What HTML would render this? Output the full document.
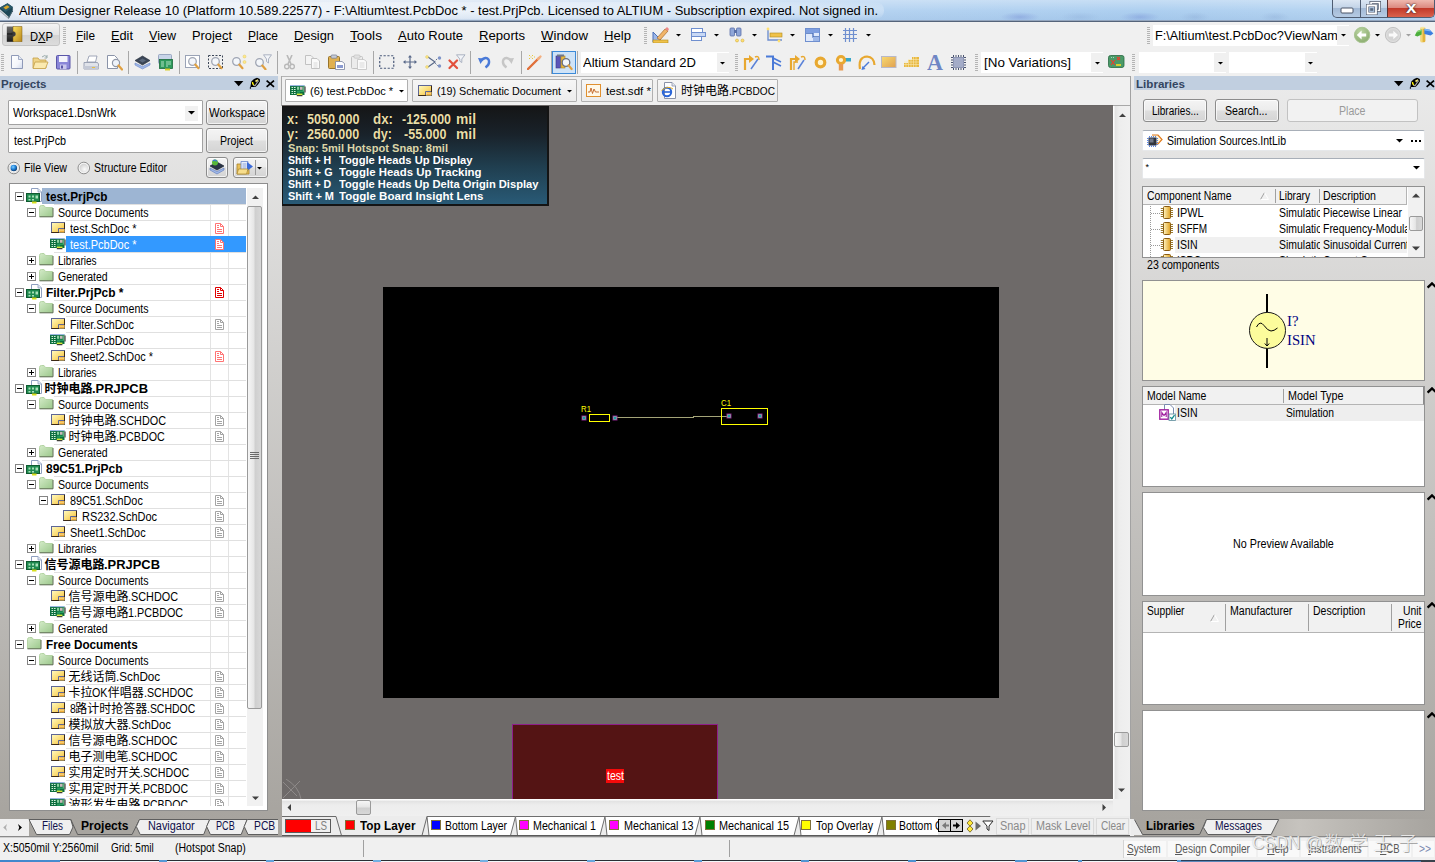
<!DOCTYPE html>
<html lang="en"><head><meta charset="utf-8"><title>Altium Designer</title><style>
html,body{margin:0;padding:0}
body{width:1435px;height:862px;overflow:hidden;position:relative;background:#f0f0f0;font-family:'Liberation Sans','Noto Sans CJK SC',sans-serif;}
.a{position:absolute;box-sizing:border-box}
.t{position:absolute;white-space:pre;margin:0;padding:0;transform-origin:0 50%}
u{text-decoration:underline;text-underline-offset:1px}
</style></head><body>
<svg width="0" height="0" style="position:absolute;left:0;top:0" aria-hidden="true"><defs><linearGradient id="fg" x1="0" y1="0" x2="1" y2="1"><stop offset="0" stop-color="#d4ebc8"/><stop offset="1" stop-color="#9cc88c"/></linearGradient><linearGradient id="sg" x1="0" y1="0" x2="1" y2="1"><stop offset="0" stop-color="#fffbc4"/><stop offset=".55" stop-color="#fbdc74"/><stop offset="1" stop-color="#f2b233"/></linearGradient><linearGradient id="cg" x1="0" y1="0" x2="1" y2="0"><stop offset="0" stop-color="#fff4c0"/><stop offset="1" stop-color="#e0a020"/></linearGradient></defs></svg>
<div class="a" style="left:0px;top:0px;width:1435px;height:22px;background:linear-gradient(to right,#e6edf6 0%,#dbe6f3 25%,#c5daf1 45%,#b0d0f0 62%,#a8ccef 80%,#b6d4f1 100%);"></div>
<div class="a" style="left:0px;top:0px;width:1435px;height:22px;background:linear-gradient(to bottom,rgba(255,255,255,.35) 0%,rgba(255,255,255,.05) 50%,rgba(120,150,190,.12) 100%);"></div>
<div class="a" style="left:70px;top:12px;width:60px;height:10px;background:radial-gradient(ellipse at center,rgba(190,140,160,.25) 0%,rgba(0,0,0,0) 70%);"></div>
<div class="a" style="left:690px;top:12px;width:70px;height:10px;background:radial-gradient(ellipse at center,rgba(190,140,170,.22) 0%,rgba(0,0,0,0) 70%);"></div>
<div class="a" style="left:1000px;top:12px;width:40px;height:10px;background:radial-gradient(ellipse at center,rgba(90,110,200,.30) 0%,rgba(0,0,0,0) 70%);"></div>
<div class="a" style="left:1120px;top:12px;width:40px;height:10px;background:radial-gradient(ellipse at center,rgba(90,110,200,.28) 0%,rgba(0,0,0,0) 70%);"></div>
<div class="a" style="left:1060px;top:12px;width:40px;height:10px;background:radial-gradient(ellipse at center,rgba(120,150,200,.2) 0%,rgba(0,0,0,0) 70%);"></div>
<div class="a" style="left:1180px;top:12px;width:30px;height:10px;background:radial-gradient(ellipse at center,rgba(110,140,190,.2) 0%,rgba(0,0,0,0) 70%);"></div>
<div class="a" style="left:1260px;top:12px;width:30px;height:10px;background:radial-gradient(ellipse at center,rgba(110,140,190,.2) 0%,rgba(0,0,0,0) 70%);"></div>
<div class="a" style="left:14px;top:2px;width:870px;height:17px;background:radial-gradient(ellipse at center,rgba(255,255,255,.55) 0%,rgba(255,255,255,.35) 60%,rgba(255,255,255,0) 100%);border-radius:8px;"></div>
<div class="a" style="left:0px;top:20px;width:1435px;height:1px;background:#93a5bd;"></div>
<div class="a" style="left:0px;top:21px;width:1435px;height:1px;background:#55647a;"></div>
<svg class="a" style="left:0px;top:2px" width="14" height="17" viewBox="0 0 14 17" ><path d="M0 5.5 L7.5 1.2 L12.8 5 L12.8 8 L8.6 15.8 L0 8.2 Z" fill="#1d4656"/><path d="M0 5.5 L7.5 1.2 L12.8 5 L5.6 10 Z" fill="#2a5a6c"/><path d="M3.4 5.6 L7.2 3.2 L9.6 5 L5.8 7.6 Z" fill="#d8a628"/><path d="M0 7.2 L8.2 14.4 L8.6 15.8 L0 8.6 Z" fill="#e8e8e8"/><path d="M0 8.8 L8.6 16 V17 L0 9.8 Z" fill="#9aa2aa"/><path d="M8.6 15.8 L12.8 8 V9.2 L8.6 17 Z" fill="#12303c"/></svg>
<span class="t" style="left:19px;top:2px;font-size:13px;line-height:17px;transform:scaleX(0.9943);">Altium Designer Release 10 (Platform 10.589.22577) - F:\Altium\test.PcbDoc * - test.PrjPcb. Licensed to ALTIUM - Subscription expired. Not signed in.</span>
<div class="a" style="left:1332px;top:0px;width:103px;height:18px;border:1px solid #4f5d72;border-top:none;border-radius:0 0 5px 5px;background:linear-gradient(to bottom,#dce7f3 0%,#c3d4e8 45%,#a3bad6 50%,#b6cbe3 100%);"></div>
<div class="a" style="left:1387px;top:0px;width:47px;height:17px;border-radius:0 0 4px 0;background:linear-gradient(to bottom,#efb9af 0%,#dc8a80 45%,#c23a2a 50%,#d9624c 100%);border-left:1px solid #5a3030;"></div>
<div class="a" style="left:1360px;top:0px;width:1px;height:17px;background:#4f5d72;"></div>
<svg class="a" style="left:1340px;top:7px" width="14" height="7" viewBox="0 0 14 7" ><rect x="1" y="1" width="12" height="5" rx="1" fill="#fff" stroke="#4a5568" stroke-width="1"/></svg>
<svg class="a" style="left:1366px;top:1px" width="15" height="14" viewBox="0 0 15 14" ><path d="M5 1.5 H13.5 V9.5 H5 Z" fill="none" stroke="#4a5568" stroke-width="3"/><path d="M5 1.5 H13.5 V9.5 H5 Z" fill="none" stroke="#fff" stroke-width="1.6"/><path d="M1.5 4.5 H10 V12.5 H1.5 Z" fill="#a9bfda" stroke="#4a5568" stroke-width="3.2"/><path d="M1.5 4.5 H10 V12.5 H1.5 Z" fill="none" stroke="#fff" stroke-width="1.8"/><rect x="4.2" y="7.2" width="3" height="2.6" fill="#5a6a80"/></svg>
<span class="t" style="left:1406px;top:-2px;font-size:17px;line-height:20px;color:#fff;font-weight:bold;transform:scaleX(1.1089);text-shadow:0 0 1px #333,0 0 2px #422;">x</span>
<div class="a" style="left:0px;top:22px;width:1435px;height:26px;background:#f0f0f0;"></div>
<div class="a" style="left:2px;top:23px;width:58px;height:23px;border:1px solid #c5c5c5;border-radius:3px;background:linear-gradient(to bottom,#f3f3f3 0%,#e4e4e4 50%,#d2d2d2 51%,#dcdcdc 100%);"></div>
<svg class="a" style="left:6px;top:26px" width="17" height="16" viewBox="0 0 17 16" ><defs><linearGradient id="dg" x1="0" y1="0" x2="0" y2="1"><stop offset="0" stop-color="#6a6a6a"/><stop offset="1" stop-color="#1c1c1c"/></linearGradient><linearGradient id="dy" x1="0" y1="0" x2="1" y2="1"><stop offset="0" stop-color="#fbe060"/><stop offset="1" stop-color="#b8861a"/></linearGradient></defs><rect x=".8" y=".5" width="7" height="15.3" fill="url(#dg)"/><path d="M7 .5 H16 V15.8 H7 V10.6 A2.6 2.6 0 0 0 7 5.4 Z" fill="url(#dy)" stroke="#7a5a10" stroke-width=".5"/><circle cx="7.3" cy="8" r="2.3" fill="#3a3a3a"/><rect x="1" y="7.2" width="5.5" height="1.5" fill="#222"/></svg>
<span class="t" style="left:29.8px;top:28px;font-size:13px;line-height:17px;transform:scaleX(0.8603);">D<u>X</u>P</span>
<div class="a" style="left:63px;top:27px;width:3px;height:17px;background:repeating-linear-gradient(to bottom,#b4b4b4 0,#b4b4b4 1px,rgba(0,0,0,0) 1px,rgba(0,0,0,0) 2px);"></div>
<span class="t" style="left:76px;top:27px;font-size:13px;line-height:17px;transform:scaleX(0.9068);"><u>F</u>ile</span>
<span class="t" style="left:111px;top:27px;font-size:13px;line-height:17px;transform:scaleX(0.9819);"><u>E</u>dit</span>
<span class="t" style="left:149px;top:27px;font-size:13px;line-height:17px;transform:scaleX(0.9659);"><u>V</u>iew</span>
<span class="t" style="left:192px;top:27px;font-size:13px;line-height:17px;transform:scaleX(0.9884);">Proje<u>c</u>t</span>
<span class="t" style="left:248px;top:27px;font-size:13px;line-height:17px;transform:scaleX(0.9222);"><u>P</u>lace</span>
<span class="t" style="left:294px;top:27px;font-size:13px;line-height:17px;transform:scaleX(0.9884);"><u>D</u>esign</span>
<span class="t" style="left:350px;top:27px;font-size:13px;line-height:17px;transform:scaleX(1.0540);"><u>T</u>ools</span>
<span class="t" style="left:398px;top:27px;font-size:13px;line-height:17px;"><u>A</u>uto Route</span>
<span class="t" style="left:479px;top:27px;font-size:13px;line-height:17px;transform:scaleX(1.0103);"><u>R</u>eports</span>
<span class="t" style="left:541px;top:27px;font-size:13px;line-height:17px;transform:scaleX(1.0162);"><u>W</u>indow</span>
<span class="t" style="left:604px;top:27px;font-size:13px;line-height:17px;transform:scaleX(1.0093);"><u>H</u>elp</span>
<div class="a" style="left:644px;top:27px;width:3px;height:17px;background:repeating-linear-gradient(to bottom,#b4b4b4 0,#b4b4b4 1px,rgba(0,0,0,0) 1px,rgba(0,0,0,0) 2px);"></div>
<svg class="a" style="left:675px;top:33px" width="7" height="4" viewBox="0 0 7 4" ><path d="M1 1 H6 L3.5 3.5 Z" fill="#000"/></svg>
<svg class="a" style="left:713px;top:33px" width="7" height="4" viewBox="0 0 7 4" ><path d="M1 1 H6 L3.5 3.5 Z" fill="#000"/></svg>
<svg class="a" style="left:751px;top:33px" width="7" height="4" viewBox="0 0 7 4" ><path d="M1 1 H6 L3.5 3.5 Z" fill="#000"/></svg>
<svg class="a" style="left:789px;top:33px" width="7" height="4" viewBox="0 0 7 4" ><path d="M1 1 H6 L3.5 3.5 Z" fill="#000"/></svg>
<svg class="a" style="left:827px;top:33px" width="7" height="4" viewBox="0 0 7 4" ><path d="M1 1 H6 L3.5 3.5 Z" fill="#000"/></svg>
<svg class="a" style="left:865px;top:33px" width="7" height="4" viewBox="0 0 7 4" ><path d="M1 1 H6 L3.5 3.5 Z" fill="#000"/></svg>
<svg class="a" style="left:652px;top:27px" width="17" height="16" viewBox="0 0 17 16" ><path d="M1 5 L1 15 L11 15 Z" fill="#9db7e8" stroke="#4a6fb8" stroke-width="1"/><rect x="1" y="13" width="15" height="3" fill="#f0c24a" stroke="#b08a20" stroke-width=".6"/><path d="M5 11 L13 2 L16 4 L8 13 Z" fill="#f1b56a" stroke="#a86a28" stroke-width=".7"/><path d="M13 2 L15 0 L17 2 L16 4Z" fill="#e88"/></svg>
<svg class="a" style="left:691px;top:28px" width="15" height="14" viewBox="0 0 15 14" ><rect x=".5" y=".5" width="11" height="4" fill="#fff" stroke="#6f8fcf"/><rect x=".5" y="4.5" width="14" height="4" fill="#c9d9f5" stroke="#6f8fcf"/><rect x=".5" y="8.5" width="10" height="4" fill="#fff" stroke="#6f8fcf"/></svg>
<svg class="a" style="left:729px;top:27px" width="16" height="16" viewBox="0 0 16 16" ><rect x="1" y="1" width="4.5" height="8" rx="1" fill="#8fa6d8" stroke="#5a70a8" stroke-width=".8"/><rect x="7.5" y="1" width="4.5" height="8" rx="1" fill="#8fa6d8" stroke="#5a70a8" stroke-width=".8"/><rect x="5" y="3" width="3" height="3" fill="#5a70a8"/><circle cx="8" cy="13.5" r="1.5" fill="#ffe070" stroke="#c8a030" stroke-width=".5"/><circle cx="13.5" cy="13.5" r="1.5" fill="#ffe070" stroke="#c8a030" stroke-width=".5"/></svg>
<svg class="a" style="left:766px;top:27px" width="18" height="16" viewBox="0 0 18 16" ><path d="M2 2 V13 H16" fill="none" stroke="#6f8fcf" stroke-width="1.4"/><rect x="4" y="6" width="12" height="4" fill="#f0c24a" stroke="#b08a20" stroke-width=".6"/><circle cx="2" cy="2" r="1.4" fill="#ffe070"/><circle cx="13" cy="14" r="1.4" fill="#ffe070"/></svg>
<svg class="a" style="left:805px;top:28px" width="15" height="14" viewBox="0 0 15 14" ><rect x=".5" y=".5" width="14" height="13" fill="#dfe9fb" stroke="#6f8fcf"/><path d="M1 5 H8 V9 H14" fill="none" stroke="#4a6fb8" stroke-width="1.3"/><rect x="1" y="1" width="13" height="4" fill="#7f9fe0"/><rect x="8" y="9" width="6" height="4" fill="#9db7e8"/></svg>
<svg class="a" style="left:843px;top:28px" width="15" height="14" viewBox="0 0 15 14" ><path d="M2.5 0V14M6.5 0V14M10.5 0V14M0 2.5H14M0 6.5H14M0 10.5H14" stroke="#6f8fcf" stroke-width="1.2" fill="none"/></svg>
<div class="a" style="left:1147px;top:27px;width:3px;height:17px;background:repeating-linear-gradient(to bottom,#b4b4b4 0,#b4b4b4 1px,rgba(0,0,0,0) 1px,rgba(0,0,0,0) 2px);"></div>
<div class="a" style="left:1153px;top:25px;width:196px;height:21px;background:#fff;"></div>
<div class="a" style="left:1337px;top:26px;width:12px;height:19px;background:#f0f0f0;"></div>
<div class="a" style="left:1154px;top:26px;width:182.5px;height:19px;overflow:hidden">
<span class="t" style="left:1px;top:1px;font-size:13px;line-height:17px;transform:scaleX(0.9751);">F:\Altium\test.PcbDoc?ViewName</span>
</div>
<svg class="a" style="left:1340px;top:33px" width="7" height="4" viewBox="0 0 7 4" ><path d="M1 1 H6 L3.5 3.5 Z" fill="#000"/></svg>
<svg class="a" style="left:1353px;top:26px" width="18" height="18" viewBox="0 0 18 18" ><defs><radialGradient id="gg" cx=".4" cy=".3" r=".8"><stop offset="0" stop-color="#bcd6a4"/><stop offset="1" stop-color="#86a86a"/></radialGradient></defs><circle cx="9.1" cy="9" r="7.7" fill="url(#gg)" stroke="#a9c592" stroke-width="1"/><path d="M3.8 9 L8.6 4.6 V7.4 H13.2 V10.6 H8.6 V13.4 Z" fill="#fff"/></svg>
<svg class="a" style="left:1374px;top:33px" width="7" height="4" viewBox="0 0 7 4" ><path d="M1 1 H6 L3.5 3.5 Z" fill="#000"/></svg>
<svg class="a" style="left:1384px;top:26px" width="18" height="18" viewBox="0 0 18 18" ><circle cx="9" cy="9" r="7.6" fill="#d4d4d4" stroke="#c2c2c2" stroke-width="1"/><circle cx="9" cy="9" r="6.4" fill="none" stroke="#e2e2e2" stroke-width=".8"/><path d="M14 9 L9.3 4.7 V7.5 H4.8 V10.5 H9.3 V13.3 Z" fill="#fafafa"/></svg>
<svg class="a" style="left:1405px;top:33px" width="7" height="4" viewBox="0 0 7 4" ><path d="M1 1 H6 L3.5 3.5 Z" fill="#a0a0a0"/></svg>
<svg class="a" style="left:1414px;top:26px" width="20" height="18" viewBox="0 0 20 18" ><rect x="6.6" y="1.2" width="4.8" height="15" rx="1.5" fill="#e3b33c"/><rect x="6.6" y="1.2" width="2" height="15" fill="#f4d877"/><ellipse cx="9" cy="1.8" rx="2.4" ry="1" fill="#f8e8a0"/><path d="M7.6 3.4 L3.2 5 L.8 9.4 L3.4 10.4 L7.6 8.6 Z" fill="#4cae3c"/><path d="M7.6 3.4 L3.2 5 L2.6 6.6 L7.6 5 Z" fill="#8ad878"/><path d="M10.4 2.8 L15.8 3.8 L19.4 7.6 L16.6 9.4 L10.4 8 Z" fill="#3c7ede"/><path d="M10.4 2.8 L15.8 3.8 L17.2 5.4 L10.4 4.4 Z" fill="#7cb8f8"/></svg>
<div class="a" style="left:0px;top:48px;width:1435px;height:28px;background:#f0f0f0;"></div>
<div class="a" style="left:278px;top:76px;width:855px;height:1px;background:#b4b4b4;"></div>
<div class="a" style="left:1px;top:54px;width:3px;height:17px;background:repeating-linear-gradient(to bottom,#b4b4b4 0,#b4b4b4 1px,rgba(0,0,0,0) 1px,rgba(0,0,0,0) 2px);"></div>
<div class="a" style="left:77px;top:51px;width:1px;height:23px;background:#a8a8a8;"></div>
<div class="a" style="left:128px;top:51px;width:1px;height:23px;background:#a8a8a8;"></div>
<div class="a" style="left:179px;top:51px;width:1px;height:23px;background:#a8a8a8;"></div>
<div class="a" style="left:277px;top:51px;width:1px;height:23px;background:#a8a8a8;"></div>
<div class="a" style="left:373px;top:51px;width:1px;height:23px;background:#a8a8a8;"></div>
<div class="a" style="left:470px;top:51px;width:1px;height:23px;background:#a8a8a8;"></div>
<div class="a" style="left:521px;top:51px;width:1px;height:23px;background:#a8a8a8;"></div>
<div class="a" style="left:551px;top:51px;width:1px;height:23px;background:#a8a8a8;"></div>
<div class="a" style="left:577px;top:51px;width:1px;height:23px;background:#a8a8a8;"></div>
<svg class="a" style="left:10.5px;top:55px" width="13" height="15" viewBox="0 0 13 15" ><defs><linearGradient id="nd" x1="0" y1="0" x2="1" y2="1"><stop offset="0" stop-color="#fff"/><stop offset=".6" stop-color="#f4f6fb"/><stop offset="1" stop-color="#cfd8ec"/></linearGradient></defs><path d="M.5 .5 H7.5 L11.5 4.5 V13.5 H.5 Z" fill="url(#nd)" stroke="#8f9ab8" stroke-width="1"/><path d="M7.5 .5 V4.5 H11.5" fill="#e4e9f4" stroke="#8f9ab8" stroke-width=".8"/></svg>
<svg class="a" style="left:32px;top:54px" width="17" height="16" viewBox="0 0 17 16" ><path d="M1 4 H6 L7.5 6 H14 V14 H1 Z" fill="#efd488" stroke="#c4a048" stroke-width=".8"/><path d="M3 8 H16 L13.5 14.5 H1 Z" fill="#fbeab0" stroke="#c4a048" stroke-width=".8"/><path d="M10 3 Q13 0 15 3" fill="none" stroke="#9aa" stroke-width="1"/><path d="M15 1 V4 H12.5" fill="none" stroke="#9aa" stroke-width="1"/></svg>
<svg class="a" style="left:56px;top:55px" width="15" height="15" viewBox="0 0 15 15" ><rect x=".5" y=".5" width="13.5" height="13.5" rx="1" fill="#8a86d8" stroke="#5a56a8"/><rect x="3" y="1" width="8.5" height="6" fill="#f4f4fb"/><rect x="4" y="9.5" width="6.5" height="4.5" fill="#c8c6ec"/><rect x="5" y="10.5" width="2" height="3" fill="#5a56a8"/></svg>
<svg class="a" style="left:83px;top:55px" width="16" height="15" viewBox="0 0 16 15" ><path d="M4 7 L6 1 H14 L12.5 7 Z" fill="#fff" stroke="#8a93a8" stroke-width=".8"/><path d="M1 7.5 H14.5 L15.5 9 V14 H1 Z" fill="#e0e3ea" stroke="#8a93a8" stroke-width=".8"/><rect x="1" y="11" width="14.5" height="3" fill="#c4c9d6"/><rect x="9" y="12" width="3" height="1" fill="#e8c040"/></svg>
<svg class="a" style="left:107px;top:55px" width="16" height="16" viewBox="0 0 16 16" ><path d="M.5 .5 H7.5 L10.5 3.5 V13.5 H.5 Z" fill="#fff" stroke="#8a93a8" stroke-width="1"/><circle cx="9" cy="8" r="3.6" fill="#eef3fa" stroke="#9098a8" stroke-width="1.2"/><path d="M11.5 10.5 L15 14.5" stroke="#e0a040" stroke-width="2.2" stroke-linecap="round"/></svg>
<svg class="a" style="left:134px;top:55px" width="17" height="15" viewBox="0 0 17 15" ><path d="M1 8 L8.5 11.5 L16 8 V10 L8.5 14 L1 10 Z" fill="#9fb8e8" stroke="#6a86c8" stroke-width=".6"/><path d="M1 5.5 L8.5 1 L16 5.5 L8.5 10 Z" fill="#3a4556" stroke="#222a36" stroke-width=".6"/><path d="M5 5.5 L8.5 3.4 L12 5.5 L8.5 7.6Z" fill="#5a687c"/></svg>
<svg class="a" style="left:157px;top:54px" width="17" height="17" viewBox="0 0 17 17" ><rect x="1.5" y=".5" width="13" height="9" rx="1" fill="#c8d4e8" stroke="#8a9ab8" stroke-width=".8"/><rect x="2.5" y="5.5" width="13" height="9" fill="#2f9a5c" stroke="#1a6a3a" stroke-width=".8"/><path d="M4 8h3M4 10h3M4 12h3M9 8h5M9 10h5M9 12h2" stroke="#bfeccf" stroke-width=".9"/><rect x="8" y="14.5" width="5" height="2" fill="#d8d030"/></svg>
<svg class="a" style="left:185px;top:55px" width="16" height="15" viewBox="0 0 16 15" ><rect x=".5" y=".5" width="14" height="12" fill="#fff" stroke="#9aa3b6"/><circle cx="7.5" cy="6.5" r="3.8" fill="#f4f7fb" stroke="#a0a6b4" stroke-width="1.3"/><path d="M10.3 9.6 L13.5 13.2" stroke="#e0a040" stroke-width="2.2" stroke-linecap="round"/></svg>
<svg class="a" style="left:208px;top:55px" width="16" height="15" viewBox="0 0 16 15" ><rect x=".5" y=".5" width="14" height="13" fill="none" stroke="#3c4658" stroke-dasharray="2 1.5"/><circle cx="7.5" cy="6.5" r="3.8" fill="#f4f7fb" stroke="#a0a6b4" stroke-width="1.3"/><path d="M10.3 9.6 L13.5 13.2" stroke="#e0a040" stroke-width="2.2" stroke-linecap="round"/></svg>
<svg class="a" style="left:231px;top:54px" width="17" height="16" viewBox="0 0 17 16" ><circle cx="5.5" cy="7.5" r="3.8" fill="#f4f7fb" stroke="#a0a6b4" stroke-width="1.3"/><path d="M8.3 10.6 L11.5 14.2" stroke="#e0a040" stroke-width="2.2" stroke-linecap="round"/><circle cx="13.5" cy="2.5" r="1.5" fill="#ffe98a" stroke="#d8c050" stroke-width=".4"/><circle cx="13.5" cy="8" r="1.5" fill="#ffe98a" stroke="#d8c050" stroke-width=".4"/></svg>
<svg class="a" style="left:254px;top:54px" width="18" height="16" viewBox="0 0 18 16" ><circle cx="5.5" cy="8.5" r="3.8" fill="#f4f7fb" stroke="#a0a6b4" stroke-width="1.3"/><path d="M8.3 11.6 L11.5 15.2" stroke="#e0a040" stroke-width="2.2" stroke-linecap="round"/><path d="M9.5 .8 H17.5 L14.5 5 V9 L12.5 7.5 V5 Z" fill="#f2f4f8" stroke="#9aa3b6" stroke-width=".8"/></svg>
<svg class="a" style="left:284px;top:55px" width="11" height="15" viewBox="0 0 11 15" ><path d="M3 0 L7 9 M8 0 L4 9" stroke="#b9b9b9" stroke-width="1.6" fill="none"/><circle cx="2.8" cy="11.5" r="2.2" fill="none" stroke="#b9b9b9" stroke-width="1.4"/><circle cx="8.2" cy="11.5" r="2.2" fill="none" stroke="#b9b9b9" stroke-width="1.4"/></svg>
<svg class="a" style="left:305px;top:55px" width="16" height="14" viewBox="0 0 16 14" ><path d="M.5 .5 H6 L8.5 3 V9.5 H.5 Z" fill="#f4f4f4" stroke="#c2c2c2"/><path d="M6.5 3.5 H12 L14.5 6 V13.5 H6.5 Z" fill="#fafafa" stroke="#c2c2c2"/><path d="M8.5 8h4M8.5 10h4M8.5 12h4" stroke="#d0d0d0" stroke-width=".8"/></svg>
<svg class="a" style="left:328px;top:54px" width="17" height="16" viewBox="0 0 17 16" ><rect x=".5" y="2.5" width="11" height="12" rx="1" fill="#e0b050" stroke="#98742a"/><rect x="3" y="1" width="6" height="3.2" rx="1" fill="#c8ccd6" stroke="#70788c" stroke-width=".7"/><path d="M7.5 7.5 H14 L16.5 9.5 V15.5 H7.5 Z" fill="#fff" stroke="#7a84a0" stroke-width=".8"/><rect x="9" y="11" width="6" height="3" fill="#8a9ad0"/></svg>
<svg class="a" style="left:351px;top:54px" width="17" height="16" viewBox="0 0 17 16" ><rect x=".5" y="2.5" width="11" height="12" rx="1" fill="#ececec" stroke="#c2c2c2"/><rect x="3" y="1" width="6" height="3.2" rx="1" fill="#e2e2e2" stroke="#c2c2c2" stroke-width=".7"/><path d="M6.5 5.5 H13 L15.5 7.5 V15.5 H6.5 Z" fill="#fafafa" stroke="#c2c2c2" stroke-width=".8"/><path d="M8.5 9h5M8.5 11h5M8.5 13h5" stroke="#d0d0d0" stroke-width=".8"/></svg>
<svg class="a" style="left:379px;top:55px" width="16" height="15" viewBox="0 0 16 15" ><rect x=".75" y=".75" width="14" height="12.5" fill="none" stroke="#4a5a7a" stroke-width="1.2" stroke-dasharray="2.2 1.6"/></svg>
<svg class="a" style="left:403px;top:55px" width="14" height="14" viewBox="0 0 14 14" ><path d="M7 1V13M1 7H13" stroke="#5a6a8a" stroke-width="1.2"/><path d="M7 0L9 2.5H5ZM7 14L9 11.5H5ZM0 7L2.5 5V9ZM14 7L11.5 5V9Z" fill="#5a6a8a"/></svg>
<svg class="a" style="left:425px;top:55px" width="17" height="14" viewBox="0 0 17 14" ><path d="M3 2 L10 7 L3 12" fill="none" stroke="#5a6a8a" stroke-width="1.2"/><path d="M14 2L9 7L14 12" fill="none" stroke="#5a6a8a" stroke-width="1" stroke-dasharray="1.5 1.2"/><circle cx="2" cy="2" r="1.4" fill="#ffe98a" stroke="#d8c050" stroke-width=".4"/><circle cx="2" cy="12" r="1.4" fill="#ffe98a" stroke="#d8c050" stroke-width=".4"/><circle cx="14.5" cy="3" r="1.7" fill="#7f94c8"/><circle cx="14.5" cy="11" r="1.7" fill="#7f94c8"/></svg>
<svg class="a" style="left:448px;top:54px" width="18" height="16" viewBox="0 0 18 16" ><path d="M1.5 6.5 L9 14 M9 6.5 L1.5 14" stroke="#e2503c" stroke-width="2.2" stroke-linecap="round"/><path d="M8.5 .8 H17 L13.8 5 V8.5 L11.8 7.2 V5 Z" fill="#f2f4f8" stroke="#9aa3b6" stroke-width=".8"/></svg>
<svg class="a" style="left:478px;top:55px" width="13" height="14" viewBox="0 0 13 14" ><path d="M3 5.5 Q8 1 10.5 4.5 Q12.5 9 7.5 12.5" fill="none" stroke="#4a7ad8" stroke-width="2.4"/><path d="M0 3 L6 3.5 L2.5 9 Z" fill="#4a7ad8"/></svg>
<svg class="a" style="left:501px;top:55px" width="13" height="14" viewBox="0 0 13 14" ><path d="M10 5.5 Q5 1 2.5 4.5 Q.5 9 5.5 12.5" fill="none" stroke="#c6c6c6" stroke-width="2.4"/><path d="M13 3 L7 3.5 L10.5 9 Z" fill="#c6c6c6"/></svg>
<svg class="a" style="left:527px;top:54px" width="16" height="16" viewBox="0 0 16 16" ><path d="M1 15 L12 4" stroke="#e0703a" stroke-width="2.4" stroke-linecap="round"/><path d="M11 5 L13.5 2.5" stroke="#f4b080" stroke-width="2.4" stroke-linecap="round"/><path d="M2 1h1v1h-1zM5 1h1v1h-1zM2 4h1v1h-1zM5 4h1v1h-1zM3.5 2.5h1v1h-1zM7 2.5h1v1h-1z" fill="#e8c83a"/></svg>
<div class="a" style="left:552px;top:51px;width:24px;height:23px;border:1px solid #3c8ad8;background:#cfe3f7;"></div>
<svg class="a" style="left:555px;top:54px" width="18" height="17" viewBox="0 0 18 17" ><rect x="1" y="2" width="4.5" height="12" fill="#5a54b8" stroke="#3a3688" stroke-width=".6"/><rect x="6" y="2" width="4" height="12" fill="#e8b840" stroke="#a88020" stroke-width=".6"/><rect x="2" y="0.5" width="7" height="2" fill="#70788c"/><circle cx="11" cy="8.5" r="3.8" fill="#f4f7fb" stroke="#6a7080" stroke-width="1.3"/><path d="M13.6 11.4 L16.6 15" stroke="#e0a040" stroke-width="2.2" stroke-linecap="round"/></svg>
<div class="a" style="left:581px;top:52px;width:148px;height:21px;background:#fff;"></div>
<div class="a" style="left:717px;top:53px;width:12px;height:19px;background:#f0f0f0;"></div>
<span class="t" style="left:583px;top:54px;font-size:13px;line-height:17px;transform:scaleX(1.0024);">Altium Standard 2D</span>
<svg class="a" style="left:719px;top:61px" width="7" height="4" viewBox="0 0 7 4" ><path d="M1 1 H6 L3.5 3.5 Z" fill="#000"/></svg>
<div class="a" style="left:735px;top:54px;width:3px;height:17px;background:repeating-linear-gradient(to bottom,#b4b4b4 0,#b4b4b4 1px,rgba(0,0,0,0) 1px,rgba(0,0,0,0) 2px);"></div>
<svg class="a" style="left:743px;top:54px" width="17" height="17" viewBox="0 0 17 17" ><path d="M2 16 V5 H9" fill="none" stroke="#e8a830" stroke-width="2.2"/><path d="M6 1 L11 5 L6 9 Z" fill="#e8a830"/><path d="M8 15 L15 5" stroke="#5a82d8" stroke-width="1.5"/><path d="M12 3 Q16 1 16 6" fill="none" stroke="#e8a830" stroke-width="1.5"/></svg>
<svg class="a" style="left:766px;top:54px" width="17" height="17" viewBox="0 0 17 17" ><path d="M0 2.5 H7 V16" fill="none" stroke="#4a7ad8" stroke-width="2"/><path d="M7 4 L15 8 M7 8 L15 12" stroke="#4a7ad8" stroke-width="1.6"/></svg>
<svg class="a" style="left:789px;top:54px" width="17" height="17" viewBox="0 0 17 17" ><path d="M2 16 V5 H9" fill="none" stroke="#e8a830" stroke-width="2.2"/><path d="M5 16 V8 H9" fill="none" stroke="#e8a830" stroke-width="1.4"/><path d="M6 1 L11 5 L6 9 Z" fill="#e8a830"/><path d="M9 15 L15 6" stroke="#5a82d8" stroke-width="1.5"/><path d="M12 3 Q16 1 16 6" fill="none" stroke="#e8a830" stroke-width="1.5"/></svg>
<svg class="a" style="left:814px;top:56px" width="13" height="13" viewBox="0 0 13 13" ><circle cx="6.5" cy="6.5" r="4.3" fill="#fff4d0" stroke="#e8a830" stroke-width="3.2"/></svg>
<svg class="a" style="left:835px;top:54px" width="17" height="17" viewBox="0 0 17 17" ><rect x="8" y="4" width="8" height="3.5" fill="#38a8c8"/><circle cx="6" cy="6" r="3.6" fill="#fff4d0" stroke="#e8a830" stroke-width="3"/><rect x="3.8" y="10" width="4.4" height="6.5" fill="#e89a50"/></svg>
<svg class="a" style="left:858px;top:54px" width="18" height="17" viewBox="0 0 18 17" ><path d="M2 15 Q0 3 9 2.5 Q16 3 16.5 11" fill="none" stroke="#e8a830" stroke-width="2.2"/><path d="M5 14 L11 8" stroke="#4a7ad8" stroke-width="1.4"/><path d="M3.5 16 L4.5 12 L7.5 15Z" fill="#4a7ad8"/></svg>
<svg class="a" style="left:881px;top:56px" width="16" height="13" viewBox="0 0 16 13" ><defs><linearGradient id="gf" x1="0" y1="0" x2="1" y2="1"><stop offset="0" stop-color="#f8da70"/><stop offset="1" stop-color="#e0a050"/></linearGradient></defs><rect x=".5" y=".5" width="14.5" height="11" fill="url(#gf)" stroke="#b8b8c8" stroke-width="1"/></svg>
<svg class="a" style="left:904px;top:56px" width="16" height="12" viewBox="0 0 16 12" ><path d="M0 11 V7 H4 V4 H8 V1 H15 V11 Z" fill="#e8b840"/><path d="M0 8.5H15M0 6H15M4 3.5H15M2 7V11M4.5 4V11M7 4V11M9.5 1V11M12 1V11" stroke="#f8e8b0" stroke-width=".6"/></svg>
<span class="t" style="left:927px;top:50px;font-size:23px;line-height:26px;color:#6f86c4;font-weight:bold;font-family:'Liberation Serif','Noto Serif CJK SC',serif;transform:scaleX(0.9624);">A</span>
<svg class="a" style="left:950px;top:54px" width="17" height="17" viewBox="0 0 17 17" ><rect x="3" y="3" width="11" height="11" fill="#8e96b4"/><rect x="4" y="4" width="9" height="9" fill="#a4acc8"/><path d="M3.5 1v2M6 1v2M8.5 1v2M11 1v2M13.5 1v2M3.5 14v2M6 14v2M8.5 14v2M11 14v2M13.5 14v2M1 3.5h2M1 6h2M1 8.5h2M1 11h2M1 13.5h2M14 3.5h2M14 6h2M14 8.5h2M14 11h2M14 13.5h2" stroke="#4a5470" stroke-width="1"/></svg>
<div class="a" style="left:975px;top:54px;width:3px;height:17px;background:repeating-linear-gradient(to bottom,#b4b4b4 0,#b4b4b4 1px,rgba(0,0,0,0) 1px,rgba(0,0,0,0) 2px);"></div>
<div class="a" style="left:981px;top:52px;width:122px;height:21px;background:#fff;"></div>
<div class="a" style="left:1091px;top:53px;width:12px;height:19px;background:#f0f0f0;"></div>
<span class="t" style="left:984px;top:54px;font-size:13px;line-height:17px;transform:scaleX(1.0321);">[No Variations]</span>
<svg class="a" style="left:1094px;top:61px" width="7" height="4" viewBox="0 0 7 4" ><path d="M1 1 H6 L3.5 3.5 Z" fill="#000"/></svg>
<svg class="a" style="left:1108px;top:54px" width="17" height="16" viewBox="0 0 17 16" ><rect x=".5" y="1.5" width="15.5" height="12" rx="2" fill="#4a9a68" stroke="#2a6a42" stroke-width=".8"/><path d="M3 6 L7 11 M7 6 L3 11 M9 3 L12 6 M12 3 L9 6" stroke="#e84030" stroke-width="1.2"/><rect x="8" y="10" width="5" height="2" fill="#d8d030"/><path d="M3 3.5h4" stroke="#bfeccf" stroke-width=".8" stroke-dasharray="1 1"/></svg>
<div class="a" style="left:1132px;top:54px;width:3px;height:17px;background:repeating-linear-gradient(to bottom,#b4b4b4 0,#b4b4b4 1px,rgba(0,0,0,0) 1px,rgba(0,0,0,0) 2px);"></div>
<div class="a" style="left:1139px;top:52px;width:87px;height:21px;background:#fff;"></div>
<div class="a" style="left:1214px;top:53px;width:12px;height:19px;background:#f0f0f0;"></div>
<svg class="a" style="left:1217px;top:61px" width="7" height="4" viewBox="0 0 7 4" ><path d="M1 1 H6 L3.5 3.5 Z" fill="#000"/></svg>
<div class="a" style="left:1229px;top:52px;width:88px;height:21px;background:#fff;"></div>
<div class="a" style="left:1305px;top:53px;width:12px;height:19px;background:#f0f0f0;"></div>
<svg class="a" style="left:1307px;top:61px" width="7" height="4" viewBox="0 0 7 4" ><path d="M1 1 H6 L3.5 3.5 Z" fill="#000"/></svg>
<div class="a" style="left:0px;top:76px;width:282px;height:743px;background:linear-gradient(to bottom,#ebebeb 0%,#a7a49f 100%);"></div>
<div class="a" style="left:281px;top:76px;width:1px;height:30px;background:#a8a8a8;"></div>
<div class="a" style="left:0px;top:76px;width:278px;height:14px;background:#c1cfe0;"></div>
<span class="t" style="left:0.5px;top:77px;font-size:11px;line-height:15px;color:#334560;font-weight:bold;transform:scaleX(1.0479);">Projects</span>
<svg class="a" style="left:234px;top:81px" width="10" height="6" viewBox="0 0 10 6" ><path d="M0 0 H9.4 L4.7 5.2 Z" fill="#000"/></svg>
<svg class="a" style="left:249px;top:77px" width="12" height="12" viewBox="0 0 12 12" ><path d="M1.2 11 L2.3 4.5 L5 2 L8 .8 L10.8 2 L11 4.5 L9 7.5 L6.5 10 L2.2 10 Z" fill="#000"/><circle cx="1.4" cy="11" r=".7" fill="#000"/><path d="M3.6 5 Q3.2 7.2 5 8" stroke="#fff200" stroke-width="1.5" fill="none"/><path d="M6 3.8 L8.6 2.2 L9.4 3.2 L7 5.2 Z" fill="#fff27a"/><path d="M4.3 8.2 L6 8.8 L8.2 5.5 L9.6 3.6" stroke="#a8a8a8" stroke-width="1.2" fill="none"/></svg>
<svg class="a" style="left:266px;top:80px" width="9" height="8" viewBox="0 0 9 8" ><path d="M.6 .6 L8 6.8 M8 .6 L.6 6.8" stroke="#000" stroke-width="1.7"/></svg>
<div class="a" style="left:8px;top:100px;width:195px;height:25px;background:#fff;border:1px solid #a2a2a2;border-radius:1px;"></div>
<div class="a" style="left:185px;top:106px;width:13px;height:15px;background:#f1f1f1;"></div>
<svg class="a" style="left:187px;top:110px" width="9" height="5" viewBox="0 0 9 5" ><path d="M1 1 H8 L4.5 4.5 Z" fill="#000"/></svg>
<span class="t" style="left:13px;top:105px;font-size:12px;line-height:16px;transform:scaleX(0.9175);">Workspace1.DsnWrk</span>
<div class="a" style="left:206px;top:100px;width:62px;height:25px;border:1px solid #8c8c8c;border-radius:3px;background:linear-gradient(to bottom,#f4f4f4 0%,#ececec 48%,#dedede 52%,#d4d4d4 100%);box-shadow:inset 0 0 0 1px rgba(255,255,255,.7);"></div>
<span class="t" style="left:209px;top:105px;font-size:12px;line-height:16px;transform:scaleX(0.9363);">Workspace</span>
<div class="a" style="left:8px;top:128px;width:195px;height:25px;background:#fff;border:1px solid #a2a2a2;border-radius:1px;"></div>
<span class="t" style="left:14px;top:133px;font-size:12px;line-height:16px;transform:scaleX(0.8961);">test.PrjPcb</span>
<div class="a" style="left:206px;top:128px;width:62px;height:25px;border:1px solid #8c8c8c;border-radius:3px;background:linear-gradient(to bottom,#f4f4f4 0%,#ececec 48%,#dedede 52%,#d4d4d4 100%);box-shadow:inset 0 0 0 1px rgba(255,255,255,.7);"></div>
<span class="t" style="left:220px;top:133px;font-size:12px;line-height:16px;transform:scaleX(0.8833);">Project</span>
<svg class="a" style="left:7px;top:161px" width="14" height="14" viewBox="0 0 14 14" ><defs><radialGradient id="rg" cx=".4" cy=".35" r=".7"><stop offset="0" stop-color="#7fd0ff"/><stop offset=".5" stop-color="#1f80d8"/><stop offset="1" stop-color="#0a2f5c"/></radialGradient></defs><circle cx="6.8" cy="7" r="5.8" fill="#f6f6f6" stroke="#8a8a8a" stroke-width="1"/><circle cx="6.8" cy="7" r="4.4" fill="#fff" stroke="#d0d0d0" stroke-width=".6"/><circle cx="6.8" cy="7" r="3.3" fill="url(#rg)"/></svg>
<span class="t" style="left:24px;top:160px;font-size:12px;line-height:16px;transform:scaleX(0.8872);">File View</span>
<svg class="a" style="left:77px;top:161px" width="14" height="14" viewBox="0 0 14 14" ><defs><radialGradient id="rg2" cx=".6" cy=".65" r=".7"><stop offset="0" stop-color="#fbfbfb"/><stop offset="1" stop-color="#cfcfcf"/></radialGradient></defs><circle cx="6.8" cy="7" r="5.8" fill="#f4f4f4" stroke="#8f8f8f" stroke-width="1"/><circle cx="6.8" cy="7" r="4.2" fill="url(#rg2)"/></svg>
<span class="t" style="left:94px;top:160px;font-size:12px;line-height:16px;transform:scaleX(0.8756);">Structure Editor</span>
<div class="a" style="left:206px;top:157px;width:22px;height:21px;border:1px solid #8c8c8c;border-radius:3px;background:linear-gradient(to bottom,#f4f4f4 0%,#ececec 48%,#dedede 52%,#d4d4d4 100%);box-shadow:inset 0 0 0 1px rgba(255,255,255,.7);"></div>
<svg class="a" style="left:209px;top:159px" width="16" height="16" viewBox="0 0 16 16" ><path d="M1 9 L8 12.5 L15 9 V11 L8 15 L1 11 Z" fill="#9fb8e8" stroke="#5a76b8" stroke-width=".6"/><path d="M1 7 L8 3 L15 7 L8 11 Z" fill="#2a3446" stroke="#111a26" stroke-width=".6"/><circle cx="6" cy="3.5" r="3" fill="#58b838"/><path d="M4 2 Q6 0 8 2.5" stroke="#3a7ad8" stroke-width="1.2" fill="none"/></svg>
<div class="a" style="left:233px;top:157px;width:35px;height:21px;border:1px solid #8c8c8c;border-radius:3px;background:linear-gradient(to bottom,#f4f4f4 0%,#ececec 48%,#dedede 52%,#d4d4d4 100%);box-shadow:inset 0 0 0 1px rgba(255,255,255,.7);"></div>
<svg class="a" style="left:236px;top:159px" width="18" height="17" viewBox="0 0 18 17" ><path d="M1 5 H5 L6.5 7 H13 V15 H1 Z" fill="#e8c05a" stroke="#a8842c" stroke-width=".8"/><path d="M5 2.5 H12 V11 H5 Z" fill="#e8eefc" stroke="#6a86c8" stroke-width=".8"/><path d="M6.5 5h4M6.5 7h4M6.5 9h4" stroke="#6a86c8" stroke-width=".7"/><path d="M11 3 L17 7.5 L11 12 Z" fill="#3a6ad8"/><path d="M2.5 10 H12 L10.5 15 H1 Z" fill="#f8de8c" stroke="#a8842c" stroke-width=".7"/></svg>
<div class="a" style="left:255px;top:160px;width:1px;height:15px;background:#9a9a9a;"></div>
<svg class="a" style="left:256px;top:166px" width="7" height="4" viewBox="0 0 7 4" ><path d="M1 1 H6 L3.5 3.5 Z" fill="#000"/></svg>
<div class="a" style="left:9px;top:183px;width:259px;height:628px;background:#fff;border:1px solid #8e8e8e;"></div>
<div class="a" style="left:10px;top:185px;width:237px;height:621px;overflow:hidden">
<div class="a" style="left:200px;top:19px;width:1px;height:620px;background:#e3e3e3"></div>
<div class="a" style="left:218px;top:19px;width:1px;height:620px;background:#e3e3e3"></div>
<div class="a" style="left:32px;top:3px;width:204px;height:16px;background:#9db5d3"></div>
<div class="a" style="left:44px;top:19px;width:192px;height:1px;background:#e0e0e0"></div>
<div class="a" style="left:56px;top:35px;width:180px;height:1px;background:#e0e0e0"></div>
<div class="a" style="left:56px;top:51px;width:180px;height:1px;background:#e0e0e0"></div>
<div class="a" style="left:56px;top:51px;width:180px;height:16px;background:#3399ff"></div>
<div class="a" style="left:44px;top:67px;width:192px;height:1px;background:#e0e0e0"></div>
<div class="a" style="left:44px;top:83px;width:192px;height:1px;background:#e0e0e0"></div>
<div class="a" style="left:32px;top:99px;width:204px;height:1px;background:#e0e0e0"></div>
<div class="a" style="left:44px;top:115px;width:192px;height:1px;background:#e0e0e0"></div>
<div class="a" style="left:56px;top:131px;width:180px;height:1px;background:#e0e0e0"></div>
<div class="a" style="left:56px;top:147px;width:180px;height:1px;background:#e0e0e0"></div>
<div class="a" style="left:56px;top:163px;width:180px;height:1px;background:#e0e0e0"></div>
<div class="a" style="left:44px;top:179px;width:192px;height:1px;background:#e0e0e0"></div>
<div class="a" style="left:32px;top:195px;width:204px;height:1px;background:#e0e0e0"></div>
<div class="a" style="left:44px;top:211px;width:192px;height:1px;background:#e0e0e0"></div>
<div class="a" style="left:56px;top:227px;width:180px;height:1px;background:#e0e0e0"></div>
<div class="a" style="left:56px;top:243px;width:180px;height:1px;background:#e0e0e0"></div>
<div class="a" style="left:44px;top:259px;width:192px;height:1px;background:#e0e0e0"></div>
<div class="a" style="left:32px;top:275px;width:204px;height:1px;background:#e0e0e0"></div>
<div class="a" style="left:44px;top:291px;width:192px;height:1px;background:#e0e0e0"></div>
<div class="a" style="left:56px;top:307px;width:180px;height:1px;background:#e0e0e0"></div>
<div class="a" style="left:68px;top:323px;width:168px;height:1px;background:#e0e0e0"></div>
<div class="a" style="left:56px;top:339px;width:180px;height:1px;background:#e0e0e0"></div>
<div class="a" style="left:44px;top:355px;width:192px;height:1px;background:#e0e0e0"></div>
<div class="a" style="left:32px;top:371px;width:204px;height:1px;background:#e0e0e0"></div>
<div class="a" style="left:44px;top:387px;width:192px;height:1px;background:#e0e0e0"></div>
<div class="a" style="left:56px;top:403px;width:180px;height:1px;background:#e0e0e0"></div>
<div class="a" style="left:56px;top:419px;width:180px;height:1px;background:#e0e0e0"></div>
<div class="a" style="left:44px;top:435px;width:192px;height:1px;background:#e0e0e0"></div>
<div class="a" style="left:32px;top:451px;width:204px;height:1px;background:#e0e0e0"></div>
<div class="a" style="left:44px;top:467px;width:192px;height:1px;background:#e0e0e0"></div>
<div class="a" style="left:56px;top:483px;width:180px;height:1px;background:#e0e0e0"></div>
<div class="a" style="left:56px;top:499px;width:180px;height:1px;background:#e0e0e0"></div>
<div class="a" style="left:56px;top:515px;width:180px;height:1px;background:#e0e0e0"></div>
<div class="a" style="left:56px;top:531px;width:180px;height:1px;background:#e0e0e0"></div>
<div class="a" style="left:56px;top:547px;width:180px;height:1px;background:#e0e0e0"></div>
<div class="a" style="left:56px;top:563px;width:180px;height:1px;background:#e0e0e0"></div>
<div class="a" style="left:56px;top:579px;width:180px;height:1px;background:#e0e0e0"></div>
<div class="a" style="left:56px;top:595px;width:180px;height:1px;background:#e0e0e0"></div>
<div class="a" style="left:56px;top:611px;width:180px;height:1px;background:#e0e0e0"></div>
<svg class="a" style="left:5px;top:7px" width="9" height="9" viewBox="0 0 9 9" ><rect x=".5" y=".5" width="8" height="8" fill="#fff" stroke="#848484"/><path d="M2 4.5h5" stroke="#000"/></svg>
<svg class="a" style="left:16px;top:3px" width="16" height="16" viewBox="0 0 16 16" ><path d="M5.5 .5 H12 L15.5 4 V13.5 H5.5 Z" fill="#fff" stroke="#8fa0c0" stroke-width="1"/><path d="M12 .5 V4 H15.5" fill="#dfe6f2" stroke="#8fa0c0" stroke-width=".8"/><rect x=".5" y="5.5" width="13" height="8" fill="#1f8a50" stroke="#0f5a30" stroke-width="1"/><path d="M2.5 7.5h2v2h-2zM6 7.5h2v2h-2zM9.5 7.5h2.5v3h-2.5zM2.5 11h2v1.5h-2zM6 11h2v1.5h-2z" fill="#a8e0b8"/><rect x="6" y="13.5" width="4.5" height="2" fill="#d8e020"/></svg>
<span class="t" style="left:35.5px;top:4px;font-size:12px;line-height:16px;font-weight:bold;"><span style="display:inline-block;width:61.50px;transform:scaleX(0.9808);transform-origin:0 50%">test.PrjPcb</span></span>
<svg class="a" style="left:17px;top:23px" width="9" height="9" viewBox="0 0 9 9" ><rect x=".5" y=".5" width="8" height="8" fill="#fff" stroke="#848484"/><path d="M2 4.5h5" stroke="#000"/></svg>
<svg class="a" style="left:29px;top:20px" width="15" height="13" viewBox="0 0 15 13" ><path d="M.5 2.5 Q.5 .5 2.5 .5 H5 L6.5 2.5 H13.5 V11.5 H.5 Z" fill="url(#fg)" stroke="#b4d4a4" stroke-width="1"/><path d="M.5 11.8 H14 V3" fill="none" stroke="#5a6a50" stroke-width="1"/></svg>
<span class="t" style="left:47.5px;top:20px;font-size:12px;line-height:16px;"><span style="display:inline-block;width:90.60px;transform:scaleX(0.8878);transform-origin:0 50%">Source Documents</span></span>
<svg class="a" style="left:41px;top:37px" width="14" height="11" viewBox="0 0 14 11" ><rect x=".5" y=".5" width="13" height="10" fill="url(#sg)" stroke="#5d6696" stroke-width="1"/><path d="M.3 10.5 H13.5 V.8" fill="none" stroke="#3d2a14" stroke-width="1"/><rect x="8" y="7" width="5.5" height="3.5" fill="#fde79a"/><path d="M7.5 10 V6.5 H13" fill="none" stroke="#5d6696" stroke-width="1"/><path d="M8.5 7.8h4.5M8.5 9.4h4.5" stroke="#f0a020" stroke-width=".9"/></svg>
<span class="t" style="left:59.5px;top:36px;font-size:12px;line-height:16px;"><span style="display:inline-block;width:66.50px;transform:scaleX(0.9147);transform-origin:0 50%">test.SchDoc *</span></span>
<svg class="a" style="left:205px;top:38px" width="10" height="11" viewBox="0 0 10 11" ><path d="M.5 .5 H5.5 L8.5 3.5 V10.5 H.5 Z" fill="none" stroke="#ff7474" stroke-width="1"/><path d="M5.5 .5 V3.5 H8.5" fill="none" stroke="#ff7474" stroke-width="1"/><path d="M2 2.5h2M2 4.5h2M2 6.5h5M2 8.5h5" stroke="#ff7474" stroke-width="1"/></svg>
<svg class="a" style="left:40.3px;top:53px" width="16" height="12" viewBox="0 0 16 12" ><rect x="0" y=".5" width="14.5" height="9.5" fill="#0c6e3e"/><path d="M0 .6h14.5" stroke="#9db8e8" stroke-width="1"/><rect x="14.3" y="1.5" width="1.4" height="6" fill="#5a5a5a"/><path d="M1.5 2.5h1.6M4 2.5h1.6M1.5 4.5h1.6M4 4.5h1.6M1.5 6.5h1.6M4 6.5h1.6M1.5 8.5h1.6M4 8.5h1.6" stroke="#d0f0d8" stroke-width="1.1"/><rect x="7" y="1.8" width="2.2" height="3" fill="#8ad0a0"/><rect x="10" y="1.8" width="2.6" height="3" fill="#c8b8b8"/><path d="M13.3 1.5v5" stroke="#8ad0a0" stroke-width=".8"/><path d="M7 6.2h6.5M7 8h3" stroke="#30b070" stroke-width="1"/><rect x="6.8" y="8.6" width="5.6" height="1.6" fill="#d8e838"/><rect x="6.8" y="10.2" width="5.6" height="1" fill="#101010"/></svg>
<span class="t" style="left:59.5px;top:52px;font-size:12px;line-height:16px;color:#fff;"><span style="display:inline-block;width:66.50px;transform:scaleX(0.9147);transform-origin:0 50%">test.PcbDoc *</span></span>
<svg class="a" style="left:205px;top:54px" width="10" height="11" viewBox="0 0 10 11" ><path d="M.5 .5 H5.5 L8.5 3.5 V10.5 H.5 Z" fill="#fff" stroke="#ff7474" stroke-width="1"/><path d="M5.5 .5 V3.5 H8.5" fill="none" stroke="#ff7474" stroke-width="1"/><path d="M2 2.5h2M2 4.5h2M2 6.5h5M2 8.5h5" stroke="#ff7474" stroke-width="1"/></svg>
<svg class="a" style="left:17px;top:71px" width="9" height="9" viewBox="0 0 9 9" ><rect x=".5" y=".5" width="8" height="8" fill="#fff" stroke="#848484"/><path d="M2 4.5h5" stroke="#000"/><path d="M4.5 2v5" stroke="#000"/></svg>
<svg class="a" style="left:29px;top:68px" width="15" height="13" viewBox="0 0 15 13" ><path d="M.5 2.5 Q.5 .5 2.5 .5 H5 L6.5 2.5 H13.5 V11.5 H.5 Z" fill="url(#fg)" stroke="#b4d4a4" stroke-width="1"/><path d="M.5 11.8 H14 V3" fill="none" stroke="#5a6a50" stroke-width="1"/></svg>
<span class="t" style="left:47.5px;top:68px;font-size:12px;line-height:16px;"><span style="display:inline-block;width:38.60px;transform:scaleX(0.8386);transform-origin:0 50%">Libraries</span></span>
<svg class="a" style="left:17px;top:87px" width="9" height="9" viewBox="0 0 9 9" ><rect x=".5" y=".5" width="8" height="8" fill="#fff" stroke="#848484"/><path d="M2 4.5h5" stroke="#000"/><path d="M4.5 2v5" stroke="#000"/></svg>
<svg class="a" style="left:29px;top:84px" width="15" height="13" viewBox="0 0 15 13" ><path d="M.5 2.5 Q.5 .5 2.5 .5 H5 L6.5 2.5 H13.5 V11.5 H.5 Z" fill="url(#fg)" stroke="#b4d4a4" stroke-width="1"/><path d="M.5 11.8 H14 V3" fill="none" stroke="#5a6a50" stroke-width="1"/></svg>
<span class="t" style="left:47.5px;top:84px;font-size:12px;line-height:16px;"><span style="display:inline-block;width:49.60px;transform:scaleX(0.8745);transform-origin:0 50%">Generated</span></span>
<svg class="a" style="left:5px;top:103px" width="9" height="9" viewBox="0 0 9 9" ><rect x=".5" y=".5" width="8" height="8" fill="#fff" stroke="#848484"/><path d="M2 4.5h5" stroke="#000"/></svg>
<svg class="a" style="left:16px;top:99px" width="16" height="16" viewBox="0 0 16 16" ><path d="M5.5 .5 H12 L15.5 4 V13.5 H5.5 Z" fill="#fff" stroke="#8fa0c0" stroke-width="1"/><path d="M12 .5 V4 H15.5" fill="#dfe6f2" stroke="#8fa0c0" stroke-width=".8"/><rect x=".5" y="5.5" width="13" height="8" fill="#1f8a50" stroke="#0f5a30" stroke-width="1"/><path d="M2.5 7.5h2v2h-2zM6 7.5h2v2h-2zM9.5 7.5h2.5v3h-2.5zM2.5 11h2v1.5h-2zM6 11h2v1.5h-2z" fill="#a8e0b8"/><rect x="6" y="13.5" width="4.5" height="2" fill="#d8e020"/></svg>
<span class="t" style="left:35.5px;top:100px;font-size:12px;line-height:16px;font-weight:bold;"><span style="display:inline-block;width:77.40px;transform:scaleX(0.9919);transform-origin:0 50%">Filter.PrjPcb *</span></span>
<svg class="a" style="left:205px;top:102px" width="10" height="11" viewBox="0 0 10 11" ><path d="M.5 .5 H5.5 L8.5 3.5 V10.5 H.5 Z" fill="#fff" stroke="#e00000" stroke-width="1"/><path d="M5.5 .5 V3.5 H8.5" fill="none" stroke="#e00000" stroke-width="1"/><path d="M2 2.5h2M2 4.5h2M2 6.5h5M2 8.5h5" stroke="#e00000" stroke-width="1"/></svg>
<svg class="a" style="left:17px;top:119px" width="9" height="9" viewBox="0 0 9 9" ><rect x=".5" y=".5" width="8" height="8" fill="#fff" stroke="#848484"/><path d="M2 4.5h5" stroke="#000"/></svg>
<svg class="a" style="left:29px;top:116px" width="15" height="13" viewBox="0 0 15 13" ><path d="M.5 2.5 Q.5 .5 2.5 .5 H5 L6.5 2.5 H13.5 V11.5 H.5 Z" fill="url(#fg)" stroke="#b4d4a4" stroke-width="1"/><path d="M.5 11.8 H14 V3" fill="none" stroke="#5a6a50" stroke-width="1"/></svg>
<span class="t" style="left:47.5px;top:116px;font-size:12px;line-height:16px;"><span style="display:inline-block;width:90.60px;transform:scaleX(0.8878);transform-origin:0 50%">Source Documents</span></span>
<svg class="a" style="left:41px;top:133px" width="14" height="11" viewBox="0 0 14 11" ><rect x=".5" y=".5" width="13" height="10" fill="url(#sg)" stroke="#5d6696" stroke-width="1"/><path d="M.3 10.5 H13.5 V.8" fill="none" stroke="#3d2a14" stroke-width="1"/><rect x="8" y="7" width="5.5" height="3.5" fill="#fde79a"/><path d="M7.5 10 V6.5 H13" fill="none" stroke="#5d6696" stroke-width="1"/><path d="M8.5 7.8h4.5M8.5 9.4h4.5" stroke="#f0a020" stroke-width=".9"/></svg>
<span class="t" style="left:59.5px;top:132px;font-size:12px;line-height:16px;"><span style="display:inline-block;width:63.90px;transform:scaleX(0.8955);transform-origin:0 50%">Filter.SchDoc</span></span>
<svg class="a" style="left:205px;top:134px" width="10" height="11" viewBox="0 0 10 11" ><path d="M.5 .5 H5.5 L8.5 3.5 V10.5 H.5 Z" fill="none" stroke="#a4a4a4" stroke-width="1"/><path d="M5.5 .5 V3.5 H8.5" fill="none" stroke="#a4a4a4" stroke-width="1"/><path d="M2 2.5h2M2 4.5h2M2 6.5h5M2 8.5h5" stroke="#a4a4a4" stroke-width="1"/></svg>
<svg class="a" style="left:40.3px;top:149px" width="16" height="12" viewBox="0 0 16 12" ><rect x="0" y=".5" width="14.5" height="9.5" fill="#0c6e3e"/><path d="M0 .6h14.5" stroke="#9db8e8" stroke-width="1"/><rect x="14.3" y="1.5" width="1.4" height="6" fill="#5a5a5a"/><path d="M1.5 2.5h1.6M4 2.5h1.6M1.5 4.5h1.6M4 4.5h1.6M1.5 6.5h1.6M4 6.5h1.6M1.5 8.5h1.6M4 8.5h1.6" stroke="#d0f0d8" stroke-width="1.1"/><rect x="7" y="1.8" width="2.2" height="3" fill="#8ad0a0"/><rect x="10" y="1.8" width="2.6" height="3" fill="#c8b8b8"/><path d="M13.3 1.5v5" stroke="#8ad0a0" stroke-width=".8"/><path d="M7 6.2h6.5M7 8h3" stroke="#30b070" stroke-width="1"/><rect x="6.8" y="8.6" width="5.6" height="1.6" fill="#d8e838"/><rect x="6.8" y="10.2" width="5.6" height="1" fill="#101010"/></svg>
<span class="t" style="left:59.5px;top:148px;font-size:12px;line-height:16px;"><span style="display:inline-block;width:63.90px;transform:scaleX(0.8955);transform-origin:0 50%">Filter.PcbDoc</span></span>
<svg class="a" style="left:41px;top:165px" width="14" height="11" viewBox="0 0 14 11" ><rect x=".5" y=".5" width="13" height="10" fill="url(#sg)" stroke="#5d6696" stroke-width="1"/><path d="M.3 10.5 H13.5 V.8" fill="none" stroke="#3d2a14" stroke-width="1"/><rect x="8" y="7" width="5.5" height="3.5" fill="#fde79a"/><path d="M7.5 10 V6.5 H13" fill="none" stroke="#5d6696" stroke-width="1"/><path d="M8.5 7.8h4.5M8.5 9.4h4.5" stroke="#f0a020" stroke-width=".9"/></svg>
<span class="t" style="left:59.5px;top:164px;font-size:12px;line-height:16px;"><span style="display:inline-block;width:83.00px;transform:scaleX(0.9082);transform-origin:0 50%">Sheet2.SchDoc *</span></span>
<svg class="a" style="left:205px;top:166px" width="10" height="11" viewBox="0 0 10 11" ><path d="M.5 .5 H5.5 L8.5 3.5 V10.5 H.5 Z" fill="none" stroke="#ff7474" stroke-width="1"/><path d="M5.5 .5 V3.5 H8.5" fill="none" stroke="#ff7474" stroke-width="1"/><path d="M2 2.5h2M2 4.5h2M2 6.5h5M2 8.5h5" stroke="#ff7474" stroke-width="1"/></svg>
<svg class="a" style="left:17px;top:183px" width="9" height="9" viewBox="0 0 9 9" ><rect x=".5" y=".5" width="8" height="8" fill="#fff" stroke="#848484"/><path d="M2 4.5h5" stroke="#000"/><path d="M4.5 2v5" stroke="#000"/></svg>
<svg class="a" style="left:29px;top:180px" width="15" height="13" viewBox="0 0 15 13" ><path d="M.5 2.5 Q.5 .5 2.5 .5 H5 L6.5 2.5 H13.5 V11.5 H.5 Z" fill="url(#fg)" stroke="#b4d4a4" stroke-width="1"/><path d="M.5 11.8 H14 V3" fill="none" stroke="#5a6a50" stroke-width="1"/></svg>
<span class="t" style="left:47.5px;top:180px;font-size:12px;line-height:16px;"><span style="display:inline-block;width:38.60px;transform:scaleX(0.8386);transform-origin:0 50%">Libraries</span></span>
<svg class="a" style="left:5px;top:199px" width="9" height="9" viewBox="0 0 9 9" ><rect x=".5" y=".5" width="8" height="8" fill="#fff" stroke="#848484"/><path d="M2 4.5h5" stroke="#000"/></svg>
<svg class="a" style="left:16px;top:195px" width="16" height="16" viewBox="0 0 16 16" ><path d="M5.5 .5 H12 L15.5 4 V13.5 H5.5 Z" fill="#fff" stroke="#8fa0c0" stroke-width="1"/><path d="M12 .5 V4 H15.5" fill="#dfe6f2" stroke="#8fa0c0" stroke-width=".8"/><rect x=".5" y="5.5" width="13" height="8" fill="#1f8a50" stroke="#0f5a30" stroke-width="1"/><path d="M2.5 7.5h2v2h-2zM6 7.5h2v2h-2zM9.5 7.5h2.5v3h-2.5zM2.5 11h2v1.5h-2zM6 11h2v1.5h-2z" fill="#a8e0b8"/><rect x="6" y="13.5" width="4.5" height="2" fill="#d8e020"/></svg>
<span class="t" style="left:34.4px;top:196px;font-size:12px;line-height:16px;font-weight:bold;"><span style="display:inline-block;width:48px;">时钟电路</span><span style="display:inline-block;width:56.00px;transform:scaleX(1.0766);transform-origin:0 50%">.PRJPCB</span></span>
<svg class="a" style="left:17px;top:215px" width="9" height="9" viewBox="0 0 9 9" ><rect x=".5" y=".5" width="8" height="8" fill="#fff" stroke="#848484"/><path d="M2 4.5h5" stroke="#000"/></svg>
<svg class="a" style="left:29px;top:212px" width="15" height="13" viewBox="0 0 15 13" ><path d="M.5 2.5 Q.5 .5 2.5 .5 H5 L6.5 2.5 H13.5 V11.5 H.5 Z" fill="url(#fg)" stroke="#b4d4a4" stroke-width="1"/><path d="M.5 11.8 H14 V3" fill="none" stroke="#5a6a50" stroke-width="1"/></svg>
<span class="t" style="left:47.5px;top:212px;font-size:12px;line-height:16px;"><span style="display:inline-block;width:90.60px;transform:scaleX(0.8878);transform-origin:0 50%">Source Documents</span></span>
<svg class="a" style="left:41px;top:229px" width="14" height="11" viewBox="0 0 14 11" ><rect x=".5" y=".5" width="13" height="10" fill="url(#sg)" stroke="#5d6696" stroke-width="1"/><path d="M.3 10.5 H13.5 V.8" fill="none" stroke="#3d2a14" stroke-width="1"/><rect x="8" y="7" width="5.5" height="3.5" fill="#fde79a"/><path d="M7.5 10 V6.5 H13" fill="none" stroke="#5d6696" stroke-width="1"/><path d="M8.5 7.8h4.5M8.5 9.4h4.5" stroke="#f0a020" stroke-width=".9"/></svg>
<span class="t" style="left:58.4px;top:228px;font-size:12px;line-height:16px;"><span style="display:inline-block;width:48px;">时钟电路</span><span style="display:inline-block;width:50.00px;transform:scaleX(0.9034);transform-origin:0 50%">.SCHDOC</span></span>
<svg class="a" style="left:205px;top:230px" width="10" height="11" viewBox="0 0 10 11" ><path d="M.5 .5 H5.5 L8.5 3.5 V10.5 H.5 Z" fill="none" stroke="#a4a4a4" stroke-width="1"/><path d="M5.5 .5 V3.5 H8.5" fill="none" stroke="#a4a4a4" stroke-width="1"/><path d="M2 2.5h2M2 4.5h2M2 6.5h5M2 8.5h5" stroke="#a4a4a4" stroke-width="1"/></svg>
<svg class="a" style="left:40.3px;top:245px" width="16" height="12" viewBox="0 0 16 12" ><rect x="0" y=".5" width="14.5" height="9.5" fill="#0c6e3e"/><path d="M0 .6h14.5" stroke="#9db8e8" stroke-width="1"/><rect x="14.3" y="1.5" width="1.4" height="6" fill="#5a5a5a"/><path d="M1.5 2.5h1.6M4 2.5h1.6M1.5 4.5h1.6M4 4.5h1.6M1.5 6.5h1.6M4 6.5h1.6M1.5 8.5h1.6M4 8.5h1.6" stroke="#d0f0d8" stroke-width="1.1"/><rect x="7" y="1.8" width="2.2" height="3" fill="#8ad0a0"/><rect x="10" y="1.8" width="2.6" height="3" fill="#c8b8b8"/><path d="M13.3 1.5v5" stroke="#8ad0a0" stroke-width=".8"/><path d="M7 6.2h6.5M7 8h3" stroke="#30b070" stroke-width="1"/><rect x="6.8" y="8.6" width="5.6" height="1.6" fill="#d8e838"/><rect x="6.8" y="10.2" width="5.6" height="1" fill="#101010"/></svg>
<span class="t" style="left:58.4px;top:244px;font-size:12px;line-height:16px;"><span style="display:inline-block;width:48px;">时钟电路</span><span style="display:inline-block;width:48.80px;transform:scaleX(0.8923);transform-origin:0 50%">.PCBDOC</span></span>
<svg class="a" style="left:205px;top:246px" width="10" height="11" viewBox="0 0 10 11" ><path d="M.5 .5 H5.5 L8.5 3.5 V10.5 H.5 Z" fill="none" stroke="#a4a4a4" stroke-width="1"/><path d="M5.5 .5 V3.5 H8.5" fill="none" stroke="#a4a4a4" stroke-width="1"/><path d="M2 2.5h2M2 4.5h2M2 6.5h5M2 8.5h5" stroke="#a4a4a4" stroke-width="1"/></svg>
<svg class="a" style="left:17px;top:263px" width="9" height="9" viewBox="0 0 9 9" ><rect x=".5" y=".5" width="8" height="8" fill="#fff" stroke="#848484"/><path d="M2 4.5h5" stroke="#000"/><path d="M4.5 2v5" stroke="#000"/></svg>
<svg class="a" style="left:29px;top:260px" width="15" height="13" viewBox="0 0 15 13" ><path d="M.5 2.5 Q.5 .5 2.5 .5 H5 L6.5 2.5 H13.5 V11.5 H.5 Z" fill="url(#fg)" stroke="#b4d4a4" stroke-width="1"/><path d="M.5 11.8 H14 V3" fill="none" stroke="#5a6a50" stroke-width="1"/></svg>
<span class="t" style="left:47.5px;top:260px;font-size:12px;line-height:16px;"><span style="display:inline-block;width:49.60px;transform:scaleX(0.8745);transform-origin:0 50%">Generated</span></span>
<svg class="a" style="left:5px;top:279px" width="9" height="9" viewBox="0 0 9 9" ><rect x=".5" y=".5" width="8" height="8" fill="#fff" stroke="#848484"/><path d="M2 4.5h5" stroke="#000"/></svg>
<svg class="a" style="left:16px;top:275px" width="16" height="16" viewBox="0 0 16 16" ><path d="M5.5 .5 H12 L15.5 4 V13.5 H5.5 Z" fill="#fff" stroke="#8fa0c0" stroke-width="1"/><path d="M12 .5 V4 H15.5" fill="#dfe6f2" stroke="#8fa0c0" stroke-width=".8"/><rect x=".5" y="5.5" width="13" height="8" fill="#1f8a50" stroke="#0f5a30" stroke-width="1"/><path d="M2.5 7.5h2v2h-2zM6 7.5h2v2h-2zM9.5 7.5h2.5v3h-2.5zM2.5 11h2v1.5h-2zM6 11h2v1.5h-2z" fill="#a8e0b8"/><rect x="6" y="13.5" width="4.5" height="2" fill="#d8e020"/></svg>
<span class="t" style="left:35.5px;top:276px;font-size:12px;line-height:16px;font-weight:bold;"><span style="display:inline-block;width:76.60px;transform:scaleX(0.9985);transform-origin:0 50%">89C51.PrjPcb</span></span>
<svg class="a" style="left:17px;top:295px" width="9" height="9" viewBox="0 0 9 9" ><rect x=".5" y=".5" width="8" height="8" fill="#fff" stroke="#848484"/><path d="M2 4.5h5" stroke="#000"/></svg>
<svg class="a" style="left:29px;top:292px" width="15" height="13" viewBox="0 0 15 13" ><path d="M.5 2.5 Q.5 .5 2.5 .5 H5 L6.5 2.5 H13.5 V11.5 H.5 Z" fill="url(#fg)" stroke="#b4d4a4" stroke-width="1"/><path d="M.5 11.8 H14 V3" fill="none" stroke="#5a6a50" stroke-width="1"/></svg>
<span class="t" style="left:47.5px;top:292px;font-size:12px;line-height:16px;"><span style="display:inline-block;width:90.60px;transform:scaleX(0.8878);transform-origin:0 50%">Source Documents</span></span>
<svg class="a" style="left:29px;top:311px" width="9" height="9" viewBox="0 0 9 9" ><rect x=".5" y=".5" width="8" height="8" fill="#fff" stroke="#848484"/><path d="M2 4.5h5" stroke="#000"/></svg>
<svg class="a" style="left:41px;top:309px" width="14" height="11" viewBox="0 0 14 11" ><rect x=".5" y=".5" width="13" height="10" fill="url(#sg)" stroke="#5d6696" stroke-width="1"/><path d="M.3 10.5 H13.5 V.8" fill="none" stroke="#3d2a14" stroke-width="1"/><rect x="8" y="7" width="5.5" height="3.5" fill="#fde79a"/><path d="M7.5 10 V6.5 H13" fill="none" stroke="#5d6696" stroke-width="1"/><path d="M8.5 7.8h4.5M8.5 9.4h4.5" stroke="#f0a020" stroke-width=".9"/></svg>
<span class="t" style="left:59.5px;top:308px;font-size:12px;line-height:16px;"><span style="display:inline-block;width:72.80px;transform:scaleX(0.9019);transform-origin:0 50%">89C51.SchDoc</span></span>
<svg class="a" style="left:205px;top:310px" width="10" height="11" viewBox="0 0 10 11" ><path d="M.5 .5 H5.5 L8.5 3.5 V10.5 H.5 Z" fill="none" stroke="#a4a4a4" stroke-width="1"/><path d="M5.5 .5 V3.5 H8.5" fill="none" stroke="#a4a4a4" stroke-width="1"/><path d="M2 2.5h2M2 4.5h2M2 6.5h5M2 8.5h5" stroke="#a4a4a4" stroke-width="1"/></svg>
<svg class="a" style="left:53px;top:325px" width="14" height="11" viewBox="0 0 14 11" ><rect x=".5" y=".5" width="13" height="10" fill="url(#sg)" stroke="#5d6696" stroke-width="1"/><path d="M.3 10.5 H13.5 V.8" fill="none" stroke="#3d2a14" stroke-width="1"/><rect x="8" y="7" width="5.5" height="3.5" fill="#fde79a"/><path d="M7.5 10 V6.5 H13" fill="none" stroke="#5d6696" stroke-width="1"/><path d="M8.5 7.8h4.5M8.5 9.4h4.5" stroke="#f0a020" stroke-width=".9"/></svg>
<span class="t" style="left:71.5px;top:324px;font-size:12px;line-height:16px;"><span style="display:inline-block;width:75.00px;transform:scaleX(0.9141);transform-origin:0 50%">RS232.SchDoc</span></span>
<svg class="a" style="left:205px;top:326px" width="10" height="11" viewBox="0 0 10 11" ><path d="M.5 .5 H5.5 L8.5 3.5 V10.5 H.5 Z" fill="none" stroke="#a4a4a4" stroke-width="1"/><path d="M5.5 .5 V3.5 H8.5" fill="none" stroke="#a4a4a4" stroke-width="1"/><path d="M2 2.5h2M2 4.5h2M2 6.5h5M2 8.5h5" stroke="#a4a4a4" stroke-width="1"/></svg>
<svg class="a" style="left:41px;top:341px" width="14" height="11" viewBox="0 0 14 11" ><rect x=".5" y=".5" width="13" height="10" fill="url(#sg)" stroke="#5d6696" stroke-width="1"/><path d="M.3 10.5 H13.5 V.8" fill="none" stroke="#3d2a14" stroke-width="1"/><rect x="8" y="7" width="5.5" height="3.5" fill="#fde79a"/><path d="M7.5 10 V6.5 H13" fill="none" stroke="#5d6696" stroke-width="1"/><path d="M8.5 7.8h4.5M8.5 9.4h4.5" stroke="#f0a020" stroke-width=".9"/></svg>
<span class="t" style="left:59.5px;top:340px;font-size:12px;line-height:16px;"><span style="display:inline-block;width:75.60px;transform:scaleX(0.9066);transform-origin:0 50%">Sheet1.SchDoc</span></span>
<svg class="a" style="left:205px;top:342px" width="10" height="11" viewBox="0 0 10 11" ><path d="M.5 .5 H5.5 L8.5 3.5 V10.5 H.5 Z" fill="none" stroke="#a4a4a4" stroke-width="1"/><path d="M5.5 .5 V3.5 H8.5" fill="none" stroke="#a4a4a4" stroke-width="1"/><path d="M2 2.5h2M2 4.5h2M2 6.5h5M2 8.5h5" stroke="#a4a4a4" stroke-width="1"/></svg>
<svg class="a" style="left:17px;top:359px" width="9" height="9" viewBox="0 0 9 9" ><rect x=".5" y=".5" width="8" height="8" fill="#fff" stroke="#848484"/><path d="M2 4.5h5" stroke="#000"/><path d="M4.5 2v5" stroke="#000"/></svg>
<svg class="a" style="left:29px;top:356px" width="15" height="13" viewBox="0 0 15 13" ><path d="M.5 2.5 Q.5 .5 2.5 .5 H5 L6.5 2.5 H13.5 V11.5 H.5 Z" fill="url(#fg)" stroke="#b4d4a4" stroke-width="1"/><path d="M.5 11.8 H14 V3" fill="none" stroke="#5a6a50" stroke-width="1"/></svg>
<span class="t" style="left:47.5px;top:356px;font-size:12px;line-height:16px;"><span style="display:inline-block;width:38.60px;transform:scaleX(0.8386);transform-origin:0 50%">Libraries</span></span>
<svg class="a" style="left:5px;top:375px" width="9" height="9" viewBox="0 0 9 9" ><rect x=".5" y=".5" width="8" height="8" fill="#fff" stroke="#848484"/><path d="M2 4.5h5" stroke="#000"/></svg>
<svg class="a" style="left:16px;top:371px" width="16" height="16" viewBox="0 0 16 16" ><path d="M5.5 .5 H12 L15.5 4 V13.5 H5.5 Z" fill="#fff" stroke="#8fa0c0" stroke-width="1"/><path d="M12 .5 V4 H15.5" fill="#dfe6f2" stroke="#8fa0c0" stroke-width=".8"/><rect x=".5" y="5.5" width="13" height="8" fill="#1f8a50" stroke="#0f5a30" stroke-width="1"/><path d="M2.5 7.5h2v2h-2zM6 7.5h2v2h-2zM9.5 7.5h2.5v3h-2.5zM2.5 11h2v1.5h-2zM6 11h2v1.5h-2z" fill="#a8e0b8"/><rect x="6" y="13.5" width="4.5" height="2" fill="#d8e020"/></svg>
<span class="t" style="left:34.4px;top:372px;font-size:12px;line-height:16px;font-weight:bold;"><span style="display:inline-block;width:60px;">信号源电路</span><span style="display:inline-block;width:56.00px;transform:scaleX(1.0766);transform-origin:0 50%">.PRJPCB</span></span>
<svg class="a" style="left:17px;top:391px" width="9" height="9" viewBox="0 0 9 9" ><rect x=".5" y=".5" width="8" height="8" fill="#fff" stroke="#848484"/><path d="M2 4.5h5" stroke="#000"/></svg>
<svg class="a" style="left:29px;top:388px" width="15" height="13" viewBox="0 0 15 13" ><path d="M.5 2.5 Q.5 .5 2.5 .5 H5 L6.5 2.5 H13.5 V11.5 H.5 Z" fill="url(#fg)" stroke="#b4d4a4" stroke-width="1"/><path d="M.5 11.8 H14 V3" fill="none" stroke="#5a6a50" stroke-width="1"/></svg>
<span class="t" style="left:47.5px;top:388px;font-size:12px;line-height:16px;"><span style="display:inline-block;width:90.60px;transform:scaleX(0.8878);transform-origin:0 50%">Source Documents</span></span>
<svg class="a" style="left:41px;top:405px" width="14" height="11" viewBox="0 0 14 11" ><rect x=".5" y=".5" width="13" height="10" fill="url(#sg)" stroke="#5d6696" stroke-width="1"/><path d="M.3 10.5 H13.5 V.8" fill="none" stroke="#3d2a14" stroke-width="1"/><rect x="8" y="7" width="5.5" height="3.5" fill="#fde79a"/><path d="M7.5 10 V6.5 H13" fill="none" stroke="#5d6696" stroke-width="1"/><path d="M8.5 7.8h4.5M8.5 9.4h4.5" stroke="#f0a020" stroke-width=".9"/></svg>
<span class="t" style="left:58.4px;top:404px;font-size:12px;line-height:16px;"><span style="display:inline-block;width:60px;">信号源电路</span><span style="display:inline-block;width:50.00px;transform:scaleX(0.9034);transform-origin:0 50%">.SCHDOC</span></span>
<svg class="a" style="left:205px;top:406px" width="10" height="11" viewBox="0 0 10 11" ><path d="M.5 .5 H5.5 L8.5 3.5 V10.5 H.5 Z" fill="none" stroke="#a4a4a4" stroke-width="1"/><path d="M5.5 .5 V3.5 H8.5" fill="none" stroke="#a4a4a4" stroke-width="1"/><path d="M2 2.5h2M2 4.5h2M2 6.5h5M2 8.5h5" stroke="#a4a4a4" stroke-width="1"/></svg>
<svg class="a" style="left:40.3px;top:421px" width="16" height="12" viewBox="0 0 16 12" ><rect x="0" y=".5" width="14.5" height="9.5" fill="#0c6e3e"/><path d="M0 .6h14.5" stroke="#9db8e8" stroke-width="1"/><rect x="14.3" y="1.5" width="1.4" height="6" fill="#5a5a5a"/><path d="M1.5 2.5h1.6M4 2.5h1.6M1.5 4.5h1.6M4 4.5h1.6M1.5 6.5h1.6M4 6.5h1.6M1.5 8.5h1.6M4 8.5h1.6" stroke="#d0f0d8" stroke-width="1.1"/><rect x="7" y="1.8" width="2.2" height="3" fill="#8ad0a0"/><rect x="10" y="1.8" width="2.6" height="3" fill="#c8b8b8"/><path d="M13.3 1.5v5" stroke="#8ad0a0" stroke-width=".8"/><path d="M7 6.2h6.5M7 8h3" stroke="#30b070" stroke-width="1"/><rect x="6.8" y="8.6" width="5.6" height="1.6" fill="#d8e838"/><rect x="6.8" y="10.2" width="5.6" height="1" fill="#101010"/></svg>
<span class="t" style="left:58.4px;top:420px;font-size:12px;line-height:16px;"><span style="display:inline-block;width:60px;">信号源电路</span><span style="display:inline-block;width:55.10px;transform:scaleX(0.8980);transform-origin:0 50%">1.PCBDOC</span></span>
<svg class="a" style="left:205px;top:422px" width="10" height="11" viewBox="0 0 10 11" ><path d="M.5 .5 H5.5 L8.5 3.5 V10.5 H.5 Z" fill="none" stroke="#a4a4a4" stroke-width="1"/><path d="M5.5 .5 V3.5 H8.5" fill="none" stroke="#a4a4a4" stroke-width="1"/><path d="M2 2.5h2M2 4.5h2M2 6.5h5M2 8.5h5" stroke="#a4a4a4" stroke-width="1"/></svg>
<svg class="a" style="left:17px;top:439px" width="9" height="9" viewBox="0 0 9 9" ><rect x=".5" y=".5" width="8" height="8" fill="#fff" stroke="#848484"/><path d="M2 4.5h5" stroke="#000"/><path d="M4.5 2v5" stroke="#000"/></svg>
<svg class="a" style="left:29px;top:436px" width="15" height="13" viewBox="0 0 15 13" ><path d="M.5 2.5 Q.5 .5 2.5 .5 H5 L6.5 2.5 H13.5 V11.5 H.5 Z" fill="url(#fg)" stroke="#b4d4a4" stroke-width="1"/><path d="M.5 11.8 H14 V3" fill="none" stroke="#5a6a50" stroke-width="1"/></svg>
<span class="t" style="left:47.5px;top:436px;font-size:12px;line-height:16px;"><span style="display:inline-block;width:49.60px;transform:scaleX(0.8745);transform-origin:0 50%">Generated</span></span>
<svg class="a" style="left:5px;top:455px" width="9" height="9" viewBox="0 0 9 9" ><rect x=".5" y=".5" width="8" height="8" fill="#fff" stroke="#848484"/><path d="M2 4.5h5" stroke="#000"/></svg>
<svg class="a" style="left:17px;top:452px" width="15" height="13" viewBox="0 0 15 13" ><path d="M.5 2.5 Q.5 .5 2.5 .5 H5 L6.5 2.5 H13.5 V11.5 H.5 Z" fill="url(#fg)" stroke="#b4d4a4" stroke-width="1"/><path d="M.5 11.8 H14 V3" fill="none" stroke="#5a6a50" stroke-width="1"/></svg>
<span class="t" style="left:35.5px;top:452px;font-size:12px;line-height:16px;font-weight:bold;"><span style="display:inline-block;width:91.70px;transform:scaleX(0.9752);transform-origin:0 50%">Free Documents</span></span>
<svg class="a" style="left:17px;top:471px" width="9" height="9" viewBox="0 0 9 9" ><rect x=".5" y=".5" width="8" height="8" fill="#fff" stroke="#848484"/><path d="M2 4.5h5" stroke="#000"/></svg>
<svg class="a" style="left:29px;top:468px" width="15" height="13" viewBox="0 0 15 13" ><path d="M.5 2.5 Q.5 .5 2.5 .5 H5 L6.5 2.5 H13.5 V11.5 H.5 Z" fill="url(#fg)" stroke="#b4d4a4" stroke-width="1"/><path d="M.5 11.8 H14 V3" fill="none" stroke="#5a6a50" stroke-width="1"/></svg>
<span class="t" style="left:47.5px;top:468px;font-size:12px;line-height:16px;"><span style="display:inline-block;width:90.60px;transform:scaleX(0.8878);transform-origin:0 50%">Source Documents</span></span>
<svg class="a" style="left:41px;top:485px" width="14" height="11" viewBox="0 0 14 11" ><rect x=".5" y=".5" width="13" height="10" fill="url(#sg)" stroke="#5d6696" stroke-width="1"/><path d="M.3 10.5 H13.5 V.8" fill="none" stroke="#3d2a14" stroke-width="1"/><rect x="8" y="7" width="5.5" height="3.5" fill="#fde79a"/><path d="M7.5 10 V6.5 H13" fill="none" stroke="#5d6696" stroke-width="1"/><path d="M8.5 7.8h4.5M8.5 9.4h4.5" stroke="#f0a020" stroke-width=".9"/></svg>
<span class="t" style="left:58.4px;top:484px;font-size:12px;line-height:16px;"><span style="display:inline-block;width:48px;">无线话筒</span><span style="display:inline-block;width:44.20px;transform:scaleX(0.9744);transform-origin:0 50%">.SchDoc</span></span>
<svg class="a" style="left:205px;top:486px" width="10" height="11" viewBox="0 0 10 11" ><path d="M.5 .5 H5.5 L8.5 3.5 V10.5 H.5 Z" fill="none" stroke="#a4a4a4" stroke-width="1"/><path d="M5.5 .5 V3.5 H8.5" fill="none" stroke="#a4a4a4" stroke-width="1"/><path d="M2 2.5h2M2 4.5h2M2 6.5h5M2 8.5h5" stroke="#a4a4a4" stroke-width="1"/></svg>
<svg class="a" style="left:41px;top:501px" width="14" height="11" viewBox="0 0 14 11" ><rect x=".5" y=".5" width="13" height="10" fill="url(#sg)" stroke="#5d6696" stroke-width="1"/><path d="M.3 10.5 H13.5 V.8" fill="none" stroke="#3d2a14" stroke-width="1"/><rect x="8" y="7" width="5.5" height="3.5" fill="#fde79a"/><path d="M7.5 10 V6.5 H13" fill="none" stroke="#5d6696" stroke-width="1"/><path d="M8.5 7.8h4.5M8.5 9.4h4.5" stroke="#f0a020" stroke-width=".9"/></svg>
<span class="t" style="left:58.4px;top:500px;font-size:12px;line-height:16px;"><span style="display:inline-block;width:24px;">卡拉</span><span style="display:inline-block;width:15.41px;transform:scaleX(0.8887);transform-origin:0 50%">OK</span><span style="display:inline-block;width:36px;">伴唱器</span><span style="display:inline-block;width:49.19px;transform:scaleX(0.8887);transform-origin:0 50%">.SCHDOC</span></span>
<svg class="a" style="left:205px;top:502px" width="10" height="11" viewBox="0 0 10 11" ><path d="M.5 .5 H5.5 L8.5 3.5 V10.5 H.5 Z" fill="none" stroke="#a4a4a4" stroke-width="1"/><path d="M5.5 .5 V3.5 H8.5" fill="none" stroke="#a4a4a4" stroke-width="1"/><path d="M2 2.5h2M2 4.5h2M2 6.5h5M2 8.5h5" stroke="#a4a4a4" stroke-width="1"/></svg>
<svg class="a" style="left:41px;top:517px" width="14" height="11" viewBox="0 0 14 11" ><rect x=".5" y=".5" width="13" height="10" fill="url(#sg)" stroke="#5d6696" stroke-width="1"/><path d="M.3 10.5 H13.5 V.8" fill="none" stroke="#3d2a14" stroke-width="1"/><rect x="8" y="7" width="5.5" height="3.5" fill="#fde79a"/><path d="M7.5 10 V6.5 H13" fill="none" stroke="#5d6696" stroke-width="1"/><path d="M8.5 7.8h4.5M8.5 9.4h4.5" stroke="#f0a020" stroke-width=".9"/></svg>
<span class="t" style="left:59.5px;top:516px;font-size:12px;line-height:16px;"><span style="display:inline-block;width:5.82px;transform:scaleX(0.8705);transform-origin:0 50%">8</span><span style="display:inline-block;width:72px;">路计时抢答器</span><span style="display:inline-block;width:48.18px;transform:scaleX(0.8705);transform-origin:0 50%">.SCHDOC</span></span>
<svg class="a" style="left:205px;top:518px" width="10" height="11" viewBox="0 0 10 11" ><path d="M.5 .5 H5.5 L8.5 3.5 V10.5 H.5 Z" fill="none" stroke="#a4a4a4" stroke-width="1"/><path d="M5.5 .5 V3.5 H8.5" fill="none" stroke="#a4a4a4" stroke-width="1"/><path d="M2 2.5h2M2 4.5h2M2 6.5h5M2 8.5h5" stroke="#a4a4a4" stroke-width="1"/></svg>
<svg class="a" style="left:41px;top:533px" width="14" height="11" viewBox="0 0 14 11" ><rect x=".5" y=".5" width="13" height="10" fill="url(#sg)" stroke="#5d6696" stroke-width="1"/><path d="M.3 10.5 H13.5 V.8" fill="none" stroke="#3d2a14" stroke-width="1"/><rect x="8" y="7" width="5.5" height="3.5" fill="#fde79a"/><path d="M7.5 10 V6.5 H13" fill="none" stroke="#5d6696" stroke-width="1"/><path d="M8.5 7.8h4.5M8.5 9.4h4.5" stroke="#f0a020" stroke-width=".9"/></svg>
<span class="t" style="left:58.4px;top:532px;font-size:12px;line-height:16px;"><span style="display:inline-block;width:60px;">模拟放大器</span><span style="display:inline-block;width:43.00px;transform:scaleX(0.9480);transform-origin:0 50%">.SchDoc</span></span>
<svg class="a" style="left:205px;top:534px" width="10" height="11" viewBox="0 0 10 11" ><path d="M.5 .5 H5.5 L8.5 3.5 V10.5 H.5 Z" fill="none" stroke="#a4a4a4" stroke-width="1"/><path d="M5.5 .5 V3.5 H8.5" fill="none" stroke="#a4a4a4" stroke-width="1"/><path d="M2 2.5h2M2 4.5h2M2 6.5h5M2 8.5h5" stroke="#a4a4a4" stroke-width="1"/></svg>
<svg class="a" style="left:41px;top:549px" width="14" height="11" viewBox="0 0 14 11" ><rect x=".5" y=".5" width="13" height="10" fill="url(#sg)" stroke="#5d6696" stroke-width="1"/><path d="M.3 10.5 H13.5 V.8" fill="none" stroke="#3d2a14" stroke-width="1"/><rect x="8" y="7" width="5.5" height="3.5" fill="#fde79a"/><path d="M7.5 10 V6.5 H13" fill="none" stroke="#5d6696" stroke-width="1"/><path d="M8.5 7.8h4.5M8.5 9.4h4.5" stroke="#f0a020" stroke-width=".9"/></svg>
<span class="t" style="left:58.4px;top:548px;font-size:12px;line-height:16px;"><span style="display:inline-block;width:60px;">信号源电路</span><span style="display:inline-block;width:49.60px;transform:scaleX(0.8962);transform-origin:0 50%">.SCHDOC</span></span>
<svg class="a" style="left:205px;top:550px" width="10" height="11" viewBox="0 0 10 11" ><path d="M.5 .5 H5.5 L8.5 3.5 V10.5 H.5 Z" fill="none" stroke="#a4a4a4" stroke-width="1"/><path d="M5.5 .5 V3.5 H8.5" fill="none" stroke="#a4a4a4" stroke-width="1"/><path d="M2 2.5h2M2 4.5h2M2 6.5h5M2 8.5h5" stroke="#a4a4a4" stroke-width="1"/></svg>
<svg class="a" style="left:41px;top:565px" width="14" height="11" viewBox="0 0 14 11" ><rect x=".5" y=".5" width="13" height="10" fill="url(#sg)" stroke="#5d6696" stroke-width="1"/><path d="M.3 10.5 H13.5 V.8" fill="none" stroke="#3d2a14" stroke-width="1"/><rect x="8" y="7" width="5.5" height="3.5" fill="#fde79a"/><path d="M7.5 10 V6.5 H13" fill="none" stroke="#5d6696" stroke-width="1"/><path d="M8.5 7.8h4.5M8.5 9.4h4.5" stroke="#f0a020" stroke-width=".9"/></svg>
<span class="t" style="left:58.4px;top:564px;font-size:12px;line-height:16px;"><span style="display:inline-block;width:60px;">电子测电笔</span><span style="display:inline-block;width:49.60px;transform:scaleX(0.8962);transform-origin:0 50%">.SCHDOC</span></span>
<svg class="a" style="left:205px;top:566px" width="10" height="11" viewBox="0 0 10 11" ><path d="M.5 .5 H5.5 L8.5 3.5 V10.5 H.5 Z" fill="none" stroke="#a4a4a4" stroke-width="1"/><path d="M5.5 .5 V3.5 H8.5" fill="none" stroke="#a4a4a4" stroke-width="1"/><path d="M2 2.5h2M2 4.5h2M2 6.5h5M2 8.5h5" stroke="#a4a4a4" stroke-width="1"/></svg>
<svg class="a" style="left:41px;top:581px" width="14" height="11" viewBox="0 0 14 11" ><rect x=".5" y=".5" width="13" height="10" fill="url(#sg)" stroke="#5d6696" stroke-width="1"/><path d="M.3 10.5 H13.5 V.8" fill="none" stroke="#3d2a14" stroke-width="1"/><rect x="8" y="7" width="5.5" height="3.5" fill="#fde79a"/><path d="M7.5 10 V6.5 H13" fill="none" stroke="#5d6696" stroke-width="1"/><path d="M8.5 7.8h4.5M8.5 9.4h4.5" stroke="#f0a020" stroke-width=".9"/></svg>
<span class="t" style="left:58.4px;top:580px;font-size:12px;line-height:16px;"><span style="display:inline-block;width:72px;">实用定时开关</span><span style="display:inline-block;width:49.20px;transform:scaleX(0.8890);transform-origin:0 50%">.SCHDOC</span></span>
<svg class="a" style="left:205px;top:582px" width="10" height="11" viewBox="0 0 10 11" ><path d="M.5 .5 H5.5 L8.5 3.5 V10.5 H.5 Z" fill="none" stroke="#a4a4a4" stroke-width="1"/><path d="M5.5 .5 V3.5 H8.5" fill="none" stroke="#a4a4a4" stroke-width="1"/><path d="M2 2.5h2M2 4.5h2M2 6.5h5M2 8.5h5" stroke="#a4a4a4" stroke-width="1"/></svg>
<svg class="a" style="left:40.3px;top:597px" width="16" height="12" viewBox="0 0 16 12" ><rect x="0" y=".5" width="14.5" height="9.5" fill="#0c6e3e"/><path d="M0 .6h14.5" stroke="#9db8e8" stroke-width="1"/><rect x="14.3" y="1.5" width="1.4" height="6" fill="#5a5a5a"/><path d="M1.5 2.5h1.6M4 2.5h1.6M1.5 4.5h1.6M4 4.5h1.6M1.5 6.5h1.6M4 6.5h1.6M1.5 8.5h1.6M4 8.5h1.6" stroke="#d0f0d8" stroke-width="1.1"/><rect x="7" y="1.8" width="2.2" height="3" fill="#8ad0a0"/><rect x="10" y="1.8" width="2.6" height="3" fill="#c8b8b8"/><path d="M13.3 1.5v5" stroke="#8ad0a0" stroke-width=".8"/><path d="M7 6.2h6.5M7 8h3" stroke="#30b070" stroke-width="1"/><rect x="6.8" y="8.6" width="5.6" height="1.6" fill="#d8e838"/><rect x="6.8" y="10.2" width="5.6" height="1" fill="#101010"/></svg>
<span class="t" style="left:58.4px;top:596px;font-size:12px;line-height:16px;"><span style="display:inline-block;width:72px;">实用定时开关</span><span style="display:inline-block;width:48.00px;transform:scaleX(0.8777);transform-origin:0 50%">.PCBDOC</span></span>
<svg class="a" style="left:205px;top:598px" width="10" height="11" viewBox="0 0 10 11" ><path d="M.5 .5 H5.5 L8.5 3.5 V10.5 H.5 Z" fill="none" stroke="#a4a4a4" stroke-width="1"/><path d="M5.5 .5 V3.5 H8.5" fill="none" stroke="#a4a4a4" stroke-width="1"/><path d="M2 2.5h2M2 4.5h2M2 6.5h5M2 8.5h5" stroke="#a4a4a4" stroke-width="1"/></svg>
<svg class="a" style="left:40.3px;top:613px" width="16" height="12" viewBox="0 0 16 12" ><rect x="0" y=".5" width="14.5" height="9.5" fill="#0c6e3e"/><path d="M0 .6h14.5" stroke="#9db8e8" stroke-width="1"/><rect x="14.3" y="1.5" width="1.4" height="6" fill="#5a5a5a"/><path d="M1.5 2.5h1.6M4 2.5h1.6M1.5 4.5h1.6M4 4.5h1.6M1.5 6.5h1.6M4 6.5h1.6M1.5 8.5h1.6M4 8.5h1.6" stroke="#d0f0d8" stroke-width="1.1"/><rect x="7" y="1.8" width="2.2" height="3" fill="#8ad0a0"/><rect x="10" y="1.8" width="2.6" height="3" fill="#c8b8b8"/><path d="M13.3 1.5v5" stroke="#8ad0a0" stroke-width=".8"/><path d="M7 6.2h6.5M7 8h3" stroke="#30b070" stroke-width="1"/><rect x="6.8" y="8.6" width="5.6" height="1.6" fill="#d8e838"/><rect x="6.8" y="10.2" width="5.6" height="1" fill="#101010"/></svg>
<span class="t" style="left:58.4px;top:612px;font-size:12px;line-height:16px;"><span style="display:inline-block;width:72px;">波形发生电路</span><span style="display:inline-block;width:48.00px;transform:scaleX(0.8777);transform-origin:0 50%">.PCBDOC</span></span>
<svg class="a" style="left:205px;top:614px" width="10" height="11" viewBox="0 0 10 11" ><path d="M.5 .5 H5.5 L8.5 3.5 V10.5 H.5 Z" fill="none" stroke="#a4a4a4" stroke-width="1"/><path d="M5.5 .5 V3.5 H8.5" fill="none" stroke="#a4a4a4" stroke-width="1"/><path d="M2 2.5h2M2 4.5h2M2 6.5h5M2 8.5h5" stroke="#a4a4a4" stroke-width="1"/></svg>
</div>
<div class="a" style="left:247px;top:188px;width:16px;height:618px;background:#f1f1f1;"></div>
<svg class="a" style="left:252px;top:195px" width="7" height="5" viewBox="0 0 7 5" ><path d="M0 4 L3.5 .5 L7 4 Z" fill="#404040"/></svg>
<svg class="a" style="left:252px;top:796px" width="7" height="5" viewBox="0 0 7 5" ><path d="M0 .5 L3.5 4 L7 .5 Z" fill="#404040"/></svg>
<div class="a" style="left:247px;top:206px;width:15px;height:503px;border:1px solid #9a9a9a;border-radius:2px;background:linear-gradient(to right,#f6f6f6 0%,#e6e6e6 45%,#cfcfcf 55%,#d8d8d8 100%);"></div>
<div class="a" style="left:250px;top:452px;width:9px;height:1px;background:#6a6a6a;"></div>
<div class="a" style="left:250px;top:454px;width:9px;height:1px;background:#6a6a6a;"></div>
<div class="a" style="left:250px;top:456px;width:9px;height:1px;background:#6a6a6a;"></div>
<div class="a" style="left:250px;top:458px;width:9px;height:1px;background:#6a6a6a;"></div>
<div class="a" style="left:282px;top:77px;width:848px;height:29px;background:#f0f0f0;"></div>
<div class="a" style="left:285px;top:79px;width:123px;height:23px;border:1px solid #b0b0b0;border-radius:1px;background:#fff;"></div>
<svg class="a" style="left:290px;top:85px" width="16" height="12" viewBox="0 0 16 12" ><rect x="0" y=".5" width="14.5" height="9.5" fill="#0c6e3e"/><path d="M0 .6h14.5" stroke="#9db8e8" stroke-width="1"/><rect x="14.3" y="1.5" width="1.4" height="6" fill="#5a5a5a"/><path d="M1.5 2.5h1.6M4 2.5h1.6M1.5 4.5h1.6M4 4.5h1.6M1.5 6.5h1.6M4 6.5h1.6M1.5 8.5h1.6M4 8.5h1.6" stroke="#d0f0d8" stroke-width="1.1"/><rect x="7" y="1.8" width="2.2" height="3" fill="#8ad0a0"/><rect x="10" y="1.8" width="2.6" height="3" fill="#c8b8b8"/><path d="M13.3 1.5v5" stroke="#8ad0a0" stroke-width=".8"/><path d="M7 6.2h6.5M7 8h3" stroke="#30b070" stroke-width="1"/><rect x="6.8" y="8.6" width="5.6" height="1.6" fill="#d8e838"/><rect x="6.8" y="10.2" width="5.6" height="1" fill="#101010"/></svg>
<span class="t" style="left:310px;top:84px;font-size:11px;line-height:15px;">(6) test.PcbDoc *</span>
<svg class="a" style="left:398px;top:89px" width="7" height="4" viewBox="0 0 7 4" ><path d="M1 1 H6 L3.5 3.5 Z" fill="#000"/></svg>
<div class="a" style="left:412px;top:79px;width:165px;height:23px;border:1px solid #b0b0b0;border-radius:1px;background:linear-gradient(to bottom,#f6f6f6,#ececec);"></div>
<svg class="a" style="left:418px;top:85px" width="14" height="11" viewBox="0 0 14 11" ><rect x=".5" y=".5" width="13" height="10" fill="url(#sg)" stroke="#5d6696" stroke-width="1"/><path d="M.3 10.5 H13.5 V.8" fill="none" stroke="#3d2a14" stroke-width="1"/><rect x="8" y="7" width="5.5" height="3.5" fill="#fde79a"/><path d="M7.5 10 V6.5 H13" fill="none" stroke="#5d6696" stroke-width="1"/><path d="M8.5 7.8h4.5M8.5 9.4h4.5" stroke="#f0a020" stroke-width=".9"/></svg>
<span class="t" style="left:437px;top:84px;font-size:11px;line-height:15px;transform:scaleX(0.9751);">(19) Schematic Document</span>
<svg class="a" style="left:566px;top:89px" width="7" height="4" viewBox="0 0 7 4" ><path d="M1 1 H6 L3.5 3.5 Z" fill="#000"/></svg>
<div class="a" style="left:581px;top:79px;width:72px;height:23px;border:1px solid #b0b0b0;border-radius:1px;background:linear-gradient(to bottom,#f6f6f6,#ececec);"></div>
<svg class="a" style="left:586px;top:84px" width="15" height="13" viewBox="0 0 15 13" ><rect x=".5" y=".5" width="14" height="12" fill="#fff8e8" stroke="#e09030" stroke-width="1"/><path d="M2 8 L4 8 L5 4 L6.5 9.5 L8 5 L9.5 8 H13" fill="none" stroke="#c06020" stroke-width=".9"/></svg>
<span class="t" style="left:606px;top:84px;font-size:11px;line-height:15px;transform:scaleX(1.0515);">test.sdf *</span>
<div class="a" style="left:657px;top:79px;width:121px;height:23px;border:1px solid #b0b0b0;border-radius:1px;background:linear-gradient(to bottom,#f6f6f6,#ececec);"></div>
<svg class="a" style="left:661px;top:82px" width="16" height="17" viewBox="0 0 16 17" ><path d="M3.5 .5 H11 L14.5 4 V16.5 H3.5 Z" fill="#fff" stroke="#8a93a8" stroke-width="1"/><path d="M11 .5 V4 H14.5" fill="#e4e8f0" stroke="#8a93a8" stroke-width=".8"/><circle cx="6" cy="10" r="4.2" fill="none" stroke="#2a66d8" stroke-width="2"/><path d="M2 10 H10" stroke="#2a66d8" stroke-width="1.6"/><path d="M.5 8.5 Q7 3 12 7" fill="none" stroke="#e8b020" stroke-width="1"/></svg>
<span class="t" style="left:681px;top:84px;font-size:11px;line-height:15px;"><span style="display:inline-block;width:48px;font-size:12px;">时钟电路</span><span style="display:inline-block;width:46.00px;transform:scaleX(0.9177);transform-origin:0 50%">.PCBDOC</span></span>
<div class="a" style="left:282px;top:105px;width:831px;height:694px;background:#6e6a69;"></div>
<div class="a" style="left:282px;top:105px;width:831px;height:1px;background:#6a6665;"></div>
<div class="a" style="left:1113px;top:105px;width:17px;height:1px;background:#a8a8a8;"></div>
<div class="a" style="left:383px;top:287px;width:616px;height:411px;background:#000;"></div>
<div class="a" style="left:282px;top:106px;width:267px;height:100px;background:linear-gradient(to bottom,#151617 0%,#19222a 28%,#203f50 62%,#295a76 100%);border:1px solid #141414;border-right:2px solid #141414;border-bottom:2px solid #141414;"></div>
<span class="t" style="left:287px;top:110px;font-size:14px;line-height:18px;color:#e8dda8;font-weight:bold;transform:scaleX(0.9235);text-shadow:0 0 1px #000;">x:</span>
<span class="t" style="left:307.2px;top:110px;font-size:14px;line-height:18px;color:#e8dda8;font-weight:bold;transform:scaleX(0.9006);text-shadow:0 0 1px #000;">5050.000</span>
<span class="t" style="left:373.3px;top:110px;font-size:14px;line-height:18px;color:#e8dda8;font-weight:bold;transform:scaleX(0.9524);text-shadow:0 0 1px #000;">dx:</span>
<span class="t" style="left:401.5px;top:110px;font-size:14px;line-height:18px;color:#e8dda8;font-weight:bold;transform:scaleX(0.8864);text-shadow:0 0 1px #000;">-125.000</span>
<span class="t" style="left:456px;top:110px;font-size:14px;line-height:18px;color:#e8dda8;font-weight:bold;transform:scaleX(0.9884);text-shadow:0 0 1px #000;">mil</span>
<span class="t" style="left:287px;top:125px;font-size:14px;line-height:18px;color:#e8dda8;font-weight:bold;transform:scaleX(0.9235);text-shadow:0 0 1px #000;">y:</span>
<span class="t" style="left:306.5px;top:125px;font-size:14px;line-height:18px;color:#e8dda8;font-weight:bold;transform:scaleX(0.8955);text-shadow:0 0 1px #000;">2560.000</span>
<span class="t" style="left:373.3px;top:125px;font-size:14px;line-height:18px;color:#e8dda8;font-weight:bold;transform:scaleX(0.9048);text-shadow:0 0 1px #000;">dy:</span>
<span class="t" style="left:404.3px;top:125px;font-size:14px;line-height:18px;color:#e8dda8;font-weight:bold;transform:scaleX(0.8950);text-shadow:0 0 1px #000;">-55.000</span>
<span class="t" style="left:456px;top:125px;font-size:14px;line-height:18px;color:#e8dda8;font-weight:bold;transform:scaleX(0.9884);text-shadow:0 0 1px #000;">mil</span>
<span class="t" style="left:288px;top:141px;font-size:11px;line-height:15px;color:#dcd6a8;font-weight:bold;transform:scaleX(1.0069);">Snap: 5mil Hotspot Snap: 8mil</span>
<span class="t" style="left:288px;top:153px;font-size:11px;line-height:15px;color:#fff;font-weight:bold;transform:scaleX(0.9617);">Shift + H</span>
<span class="t" style="left:338.8px;top:153px;font-size:11px;line-height:15px;color:#fff;font-weight:bold;transform:scaleX(1.0174);">Toggle Heads Up Display</span>
<span class="t" style="left:288px;top:165px;font-size:11px;line-height:15px;color:#fff;font-weight:bold;transform:scaleX(0.9774);">Shift + G</span>
<span class="t" style="left:338.8px;top:165px;font-size:11px;line-height:15px;color:#fff;font-weight:bold;transform:scaleX(1.0377);">Toggle Heads Up Tracking</span>
<span class="t" style="left:288px;top:177px;font-size:11px;line-height:15px;color:#fff;font-weight:bold;transform:scaleX(0.9617);">Shift + D</span>
<span class="t" style="left:338.8px;top:177px;font-size:11px;line-height:15px;color:#fff;font-weight:bold;transform:scaleX(1.0147);">Toggle Heads Up Delta Origin Display</span>
<span class="t" style="left:288px;top:189px;font-size:11px;line-height:15px;color:#fff;font-weight:bold;transform:scaleX(0.9970);">Shift + M</span>
<span class="t" style="left:338.8px;top:189px;font-size:11px;line-height:15px;color:#fff;font-weight:bold;transform:scaleX(1.0477);">Toggle Board Insight Lens</span>
<div class="a" style="left:615px;top:417px;width:79px;height:1px;background:#a4a478;"></div>
<div class="a" style="left:693px;top:416px;width:36px;height:1px;background:#a4a478;"></div>
<div class="a" style="left:589px;top:414px;width:21px;height:8px;border:1px solid #ffff00;"></div>
<div class="a" style="left:721px;top:408px;width:47px;height:17px;border:1px solid #ffff00;"></div>
<svg class="a" style="left:581px;top:415px" width="6" height="6" viewBox="0 0 6 6" ><rect x=".5" y=".5" width="5" height="5" fill="#8a208a"/><rect x="1.2" y="1.2" width="3.6" height="3.6" fill="#8aa0a6"/><rect x="2" y="2" width="2" height="2" fill="#18a0a8"/></svg>
<svg class="a" style="left:612px;top:415px" width="6" height="6" viewBox="0 0 6 6" ><rect x=".5" y=".5" width="5" height="5" fill="#8a208a"/><rect x="1.2" y="1.2" width="3.6" height="3.6" fill="#8aa0a6"/><rect x="2" y="2" width="2" height="2" fill="#18a0a8"/></svg>
<svg class="a" style="left:726px;top:413px" width="6" height="6" viewBox="0 0 6 6" ><rect x=".5" y=".5" width="5" height="5" fill="#8a208a"/><rect x="1.2" y="1.2" width="3.6" height="3.6" fill="#8aa0a6"/><rect x="2" y="2" width="2" height="2" fill="#18a0a8"/></svg>
<svg class="a" style="left:757px;top:413px" width="6" height="6" viewBox="0 0 6 6" ><rect x=".5" y=".5" width="5" height="5" fill="#8a208a"/><rect x="1.2" y="1.2" width="3.6" height="3.6" fill="#8aa0a6"/><rect x="2" y="2" width="2" height="2" fill="#18a0a8"/></svg>
<span class="t" style="left:581px;top:404px;font-size:9px;line-height:11px;color:#ffff00;transform:scaleX(0.8684);">R1</span>
<span class="t" style="left:721px;top:398px;font-size:9px;line-height:11px;color:#ffff00;transform:scaleX(0.8684);">C1</span>
<div class="a" style="left:512px;top:724px;width:206px;height:75px;background:#541414;border:1px solid #8f1f8a;border-bottom:none;"></div>
<div class="a" style="left:606px;top:769px;width:18px;height:14px;background:#f40a0a;"></div>
<span class="t" style="left:606.5px;top:768px;font-size:12px;line-height:16px;color:#fff;transform:scaleX(0.8788);">test</span>
<svg class="a" style="left:283px;top:779px" width="20" height="20" viewBox="0 0 20 20" ><path d="M0 19 L17 2 M0 3 L14 17 M3 0 Q16 8 18 20" fill="none" stroke="#8e8a89" stroke-width="1"/></svg>
<div class="a" style="left:1113px;top:106px;width:17px;height:710px;background:#f0f0f0;"></div>
<div class="a" style="left:1113px;top:106px;width:17px;height:693px;background:linear-gradient(to right,#fdfdfd 0,#fdfdfd 1px,#e2e2e2 2px,#ededed 6px,#f0f0f0 100%);"></div>
<svg class="a" style="left:1119px;top:113px" width="7" height="5" viewBox="0 0 7 5" ><path d="M0 4 L3.5 .5 L7 4 Z" fill="#404040"/></svg>
<svg class="a" style="left:1118px;top:788px" width="7" height="5" viewBox="0 0 7 5" ><path d="M0 .5 L3.5 4 L7 .5 Z" fill="#404040"/></svg>
<div class="a" style="left:1114px;top:732px;width:15px;height:15px;border:1px solid #9a9a9a;border-radius:2px;background:linear-gradient(to right,#f6f6f6 0%,#e6e6e6 45%,#cfcfcf 55%,#d8d8d8 100%);"></div>
<div class="a" style="left:282px;top:799px;width:831px;height:17px;background:linear-gradient(to bottom,#fdfdfd 0,#fdfdfd 1px,#e2e2e2 2px,#ededed 6px,#f0f0f0 100%);"></div>
<svg class="a" style="left:287px;top:804px" width="5" height="7" viewBox="0 0 5 7" ><path d="M4 0 L.5 3.5 L4 7 Z" fill="#404040"/></svg>
<svg class="a" style="left:1102px;top:804px" width="5" height="7" viewBox="0 0 5 7" ><path d="M.5 0 L4 3.5 L.5 7 Z" fill="#404040"/></svg>
<div class="a" style="left:356px;top:800px;width:15px;height:15px;border:1px solid #9a9a9a;border-radius:2px;background:linear-gradient(to bottom,#f6f6f6 0%,#e6e6e6 45%,#cfcfcf 55%,#d8d8d8 100%);"></div>
<div class="a" style="left:282px;top:816px;width:848px;height:20px;background:#ececec;"></div>
<div class="a" style="left:285px;top:819px;width:46px;height:14px;background:#f0f0f0;border:1px solid #5a5a5a;"></div>
<div class="a" style="left:286px;top:820px;width:25px;height:12px;background:#ff0000;"></div>
<span class="t" style="left:314.5px;top:818px;font-size:12px;line-height:16px;color:#808080;transform:scaleX(0.8170);">LS</span>
<svg class="a" style="left:282px;top:816px" width="848" height="22" viewBox="0 0 848 22" ><path d="M0 .5 H54 L59.5 19.5 H140 L145 .5" fill="none" stroke="#6a6a6a" stroke-width="1"/><path d="M145 .5 L147 19.5 H228.5 L233.5 .5 Z" fill="#fff" stroke="#6e6e6e" stroke-width="1"/><path d="M233.5 .5 L235.5 19.5 H318 L323 .5 Z" fill="#fff" stroke="#6e6e6e" stroke-width="1"/><path d="M323 .5 L325 19.5 H413 L418 .5 Z" fill="#fff" stroke="#6e6e6e" stroke-width="1"/><path d="M418 .5 L420 19.5 H512 L517 .5 Z" fill="#fff" stroke="#6e6e6e" stroke-width="1"/><path d="M517 .5 L519 19.5 H595 L600 .5 Z" fill="#fff" stroke="#6e6e6e" stroke-width="1"/><path d="M600 .5 L602 19.5 H703 L708 .5 Z" fill="#fff" stroke="#6e6e6e" stroke-width="1"/><path d="M0 19.6 H848" stroke="#5a5a5a" stroke-width="1.4"/></svg>
<div class="a" style="left:345px;top:820px;width:10px;height:10px;background:#ff0000;border:1px solid #80703a;"></div>
<span class="t" style="left:359.5px;top:818px;font-size:12px;line-height:16px;font-weight:bold;transform:scaleX(0.9828);">Top Layer</span>
<div class="a" style="left:431px;top:820px;width:10px;height:10px;background:#0000ff;border:1px solid #80703a;"></div>
<span class="t" style="left:445.2px;top:818px;font-size:12px;line-height:16px;transform:scaleX(0.8687);">Bottom Layer</span>
<div class="a" style="left:519px;top:820px;width:10px;height:10px;background:#ff00ff;border:1px solid #80703a;"></div>
<span class="t" style="left:533.3px;top:818px;font-size:12px;line-height:16px;transform:scaleX(0.8909);">Mechanical 1</span>
<div class="a" style="left:609px;top:820px;width:10px;height:10px;background:#ff00ff;border:1px solid #80703a;"></div>
<span class="t" style="left:623.5px;top:818px;font-size:12px;line-height:16px;transform:scaleX(0.8980);">Mechanical 13</span>
<div class="a" style="left:705px;top:820px;width:10px;height:10px;background:#008000;border:1px solid #80703a;"></div>
<span class="t" style="left:719.4px;top:818px;font-size:12px;line-height:16px;transform:scaleX(0.9045);">Mechanical 15</span>
<div class="a" style="left:801px;top:820px;width:10px;height:10px;background:#ffff00;border:1px solid #80703a;"></div>
<span class="t" style="left:815.9px;top:818px;font-size:12px;line-height:16px;transform:scaleX(0.8902);">Top Overlay</span>
<div class="a" style="left:885.5px;top:820px;width:10px;height:10px;background:#808000;border:1px solid #80703a;"></div>
<span class="t" style="left:899px;top:818px;font-size:12px;line-height:16px;transform:scaleX(0.8706);">Bottom Overlay</span>
<div class="a" style="left:938px;top:817px;width:192px;height:18px;background:#ececec;"></div>
<div class="a" style="left:938px;top:835px;width:192px;height:1px;background:#5a5a5a;"></div>
<div class="a" style="left:938px;top:819px;width:25px;height:13px;background:#d4d4d4;border:1px solid #000;"></div>
<div class="a" style="left:950px;top:819px;width:1px;height:13px;background:#000;"></div>
<svg class="a" style="left:940px;top:821px" width="9" height="9" viewBox="0 0 9 9" ><path d="M6 1 L2 4.5 L6 8 Z" fill="#7a7a7a"/><rect x="6" y="3.5" width="3" height="2" fill="#7a7a7a"/></svg>
<svg class="a" style="left:952px;top:821px" width="9" height="9" viewBox="0 0 9 9" ><path d="M4 1 L8 4.5 L4 8 Z" fill="#000"/><rect x="1" y="3.5" width="3" height="2" fill="#000"/></svg>
<svg class="a" style="left:966px;top:819px" width="8" height="14" viewBox="0 0 8 14" ><path d="M4 .8 L7 4 L4 7.2 L1 4 Z M4 6.8 L7 10 L4 13.2 L1 10 Z" fill="#ffe93a" stroke="#6a5a20" stroke-width=".8"/></svg>
<svg class="a" style="left:975px;top:821px" width="7" height="10" viewBox="0 0 7 10" ><path d="M.5 .5 L6 5 L.5 9.5 Z" fill="#6a6a6a"/></svg>
<svg class="a" style="left:982px;top:820px" width="12" height="12" viewBox="0 0 12 12" ><path d="M.8 1 H11 L7 6 V10.5 L5 9 V6 Z" fill="#fff" stroke="#2a2a2a" stroke-width="1"/></svg>
<div class="a" style="left:996px;top:818px;width:33px;height:17px;border:1px solid #dadada;background:#efefef;"></div>
<span class="t" style="left:1000px;top:818px;font-size:12px;line-height:16px;color:#8a8a8a;transform:scaleX(0.9097);">Snap</span>
<div class="a" style="left:1031px;top:818px;width:63px;height:17px;border:1px solid #dadada;background:#efefef;"></div>
<span class="t" style="left:1035.5px;top:818px;font-size:12px;line-height:16px;color:#8a8a8a;transform:scaleX(0.8978);">Mask Level</span>
<div class="a" style="left:1096px;top:818px;width:33px;height:17px;border:1px solid #dadada;background:#efefef;"></div>
<span class="t" style="left:1101px;top:818px;font-size:12px;line-height:16px;color:#8a8a8a;transform:scaleX(0.8366);">Clear</span>
<div class="a" style="left:1130px;top:76px;width:305px;height:743px;background:linear-gradient(to bottom,#ebebeb 0%,#a7a49f 100%);"></div>
<div class="a" style="left:1134px;top:819px;width:301px;height:17px;background:linear-gradient(to right,#a7a49f 0%,#a9a6a1 25%,#c6c3be 55%,#b4b1ac 80%,#a7a49f 100%);"></div>
<div class="a" style="left:1130px;top:76px;width:1px;height:743px;background:#a2a2a2;"></div>
<div class="a" style="left:1134px;top:76px;width:301px;height:14px;background:#c1cfe0;"></div>
<span class="t" style="left:1136px;top:77px;font-size:11px;line-height:15px;color:#334560;font-weight:bold;transform:scaleX(1.0545);">Libraries</span>
<svg class="a" style="left:1394px;top:81px" width="10" height="6" viewBox="0 0 10 6" ><path d="M0 0 H9.4 L4.7 5.2 Z" fill="#000"/></svg>
<svg class="a" style="left:1409px;top:77px" width="12" height="12" viewBox="0 0 12 12" ><path d="M1.2 11 L2.3 4.5 L5 2 L8 .8 L10.8 2 L11 4.5 L9 7.5 L6.5 10 L2.2 10 Z" fill="#000"/><circle cx="1.4" cy="11" r=".7" fill="#000"/><path d="M3.6 5 Q3.2 7.2 5 8" stroke="#fff200" stroke-width="1.5" fill="none"/><path d="M6 3.8 L8.6 2.2 L9.4 3.2 L7 5.2 Z" fill="#fff27a"/><path d="M4.3 8.2 L6 8.8 L8.2 5.5 L9.6 3.6" stroke="#a8a8a8" stroke-width="1.2" fill="none"/></svg>
<svg class="a" style="left:1426px;top:80px" width="9" height="8" viewBox="0 0 9 8" ><path d="M.6 .6 L8 6.8 M8 .6 L.6 6.8" stroke="#000" stroke-width="1.7"/></svg>
<div class="a" style="left:1143px;top:99px;width:64px;height:23px;border:1px solid #8c8c8c;border-radius:3px;background:linear-gradient(to bottom,#f4f4f4 0%,#ececec 48%,#dedede 52%,#d4d4d4 100%);box-shadow:inset 0 0 0 1px rgba(255,255,255,.7);"></div>
<span class="t" style="left:1151.7px;top:103px;font-size:12px;line-height:16px;transform:scaleX(0.8352);">Libraries...</span>
<div class="a" style="left:1215px;top:99px;width:64px;height:23px;border:1px solid #8c8c8c;border-radius:3px;background:linear-gradient(to bottom,#f4f4f4 0%,#ececec 48%,#dedede 52%,#d4d4d4 100%);box-shadow:inset 0 0 0 1px rgba(255,255,255,.7);"></div>
<span class="t" style="left:1225.3px;top:103px;font-size:12px;line-height:16px;transform:scaleX(0.8848);">Search...</span>
<div class="a" style="left:1287px;top:99px;width:131px;height:23px;border:1px solid #c2c2c2;border-radius:3px;background:#f2f2f2;"></div>
<span class="t" style="left:1339.3px;top:103px;font-size:12px;line-height:16px;color:#9a9a9a;transform:scaleX(0.8824);">Place</span>
<div class="a" style="left:1142px;top:130px;width:283px;height:21px;background:#fff;border:1px solid #e6e8ea;border-top-color:#a8afb8;border-radius:2px;"></div>
<svg class="a" style="left:1146px;top:133px" width="17" height="15" viewBox="0 0 17 15" ><path d="M6 2 H12 L16 6.5 L12 11 H6" fill="#fff4d8" stroke="#e07818" stroke-width="1.2"/><rect x="2.5" y="4.5" width="8" height="8" fill="#30343c"/><rect x="3.5" y="5.5" width="4" height="4" fill="#70788a"/><path d="M1 5.5h1.5M1 7.5h1.5M1 9.5h1.5M1 11.5h1.5M10.5 5.5h1.5M10.5 7.5h1.5M10.5 9.5h1.5M10.5 11.5h1.5M3.5 3v1.5M5.5 3v1.5M7.5 3v1.5M9.5 3v1.5M3.5 12.5v1.5M5.5 12.5v1.5M7.5 12.5v1.5M9.5 12.5v1.5" stroke="#4a78e0" stroke-width=".9"/></svg>
<span class="t" style="left:1167px;top:133px;font-size:12px;line-height:16px;transform:scaleX(0.8745);">Simulation Sources.IntLib</span>
<svg class="a" style="left:1395px;top:138px" width="9" height="5" viewBox="0 0 9 5" ><path d="M1 1 H8 L4.5 4.5 Z" fill="#000"/></svg>
<div class="a" style="left:1411px;top:140px;width:2px;height:2px;background:#000;"></div>
<div class="a" style="left:1415px;top:140px;width:2px;height:2px;background:#000;"></div>
<div class="a" style="left:1419px;top:140px;width:2px;height:2px;background:#000;"></div>
<div class="a" style="left:1142px;top:158px;width:283px;height:21px;background:#fff;border:1px solid #e6e8ea;border-top-color:#a8afb8;border-radius:2px;"></div>
<span class="t" style="left:1145.6px;top:161px;font-size:9px;line-height:12px;">*</span>
<svg class="a" style="left:1412px;top:165px" width="9" height="5" viewBox="0 0 9 5" ><path d="M1 1 H8 L4.5 4.5 Z" fill="#000"/></svg>
<div class="a" style="left:1142px;top:186px;width:283px;height:72px;background:#fff;border:1px solid #919191;"></div>
<div class="a" style="left:1143px;top:204px;width:264px;height:53px;overflow:hidden">
<div class="a" style="left:32px;top:33px;width:232px;height:16px;background:#f0f0f0;"></div>
<div class="a" style="left:7px;top:0px;width:1px;height:54px;background:repeating-linear-gradient(to bottom,#9a9a9a 0,#9a9a9a 1px,rgba(0,0,0,0) 1px,rgba(0,0,0,0) 2px);"></div>
<div class="a" style="left:8px;top:9px;width:9px;height:1px;background:repeating-linear-gradient(to right,#9a9a9a 0,#9a9a9a 1px,rgba(0,0,0,0) 1px,rgba(0,0,0,0) 2px);"></div>
<svg class="a" style="left:16.8px;top:2px" width="13" height="13" viewBox="0 0 13 13" ><rect x="3.5" y=".5" width="7" height="12" rx="1" fill="url(#cg)" stroke="#8a5a10" stroke-width="1"/><path d="M.8 2.5h2.5M.8 4.5h2.5M.8 6.5h2.5M.8 8.5h2.5M.8 10.5h2.5M10.7 2.5h2.3M10.7 4.5h2.3M10.7 6.5h2.3M10.7 8.5h2.3M10.7 10.5h2.3" stroke="#9a7a30" stroke-width="1"/></svg>
<span class="t" style="left:34.3px;top:1px;font-size:12px;line-height:16px;transform:scaleX(0.9099);">IPWL</span>
<div class="a" style="left:133px;top:0px;width:43.5px;height:16px;overflow:hidden">
<span class="t" style="left:2.6px;top:1px;font-size:12px;line-height:16px;transform:scaleX(0.8708);">Simulation Sources.IntLib</span>
</div>
<span class="t" style="left:179.8px;top:1px;font-size:12px;line-height:16px;transform:scaleX(0.8708);">Piecewise Linear</span>
<div class="a" style="left:8px;top:25px;width:9px;height:1px;background:repeating-linear-gradient(to right,#9a9a9a 0,#9a9a9a 1px,rgba(0,0,0,0) 1px,rgba(0,0,0,0) 2px);"></div>
<svg class="a" style="left:16.8px;top:18px" width="13" height="13" viewBox="0 0 13 13" ><rect x="3.5" y=".5" width="7" height="12" rx="1" fill="url(#cg)" stroke="#8a5a10" stroke-width="1"/><path d="M.8 2.5h2.5M.8 4.5h2.5M.8 6.5h2.5M.8 8.5h2.5M.8 10.5h2.5M10.7 2.5h2.3M10.7 4.5h2.3M10.7 6.5h2.3M10.7 8.5h2.3M10.7 10.5h2.3" stroke="#9a7a30" stroke-width="1"/></svg>
<span class="t" style="left:34.3px;top:17px;font-size:12px;line-height:16px;transform:scaleX(0.8333);">ISFFM</span>
<div class="a" style="left:133px;top:16px;width:43.5px;height:16px;overflow:hidden">
<span class="t" style="left:2.6px;top:1px;font-size:12px;line-height:16px;transform:scaleX(0.8708);">Simulation Sources.IntLib</span>
</div>
<span class="t" style="left:179.8px;top:17px;font-size:12px;line-height:16px;transform:scaleX(0.8708);">Frequency-Modulated</span>
<div class="a" style="left:8px;top:41px;width:9px;height:1px;background:repeating-linear-gradient(to right,#9a9a9a 0,#9a9a9a 1px,rgba(0,0,0,0) 1px,rgba(0,0,0,0) 2px);"></div>
<svg class="a" style="left:16.8px;top:34px" width="13" height="13" viewBox="0 0 13 13" ><rect x="3.5" y=".5" width="7" height="12" rx="1" fill="url(#cg)" stroke="#8a5a10" stroke-width="1"/><path d="M.8 2.5h2.5M.8 4.5h2.5M.8 6.5h2.5M.8 8.5h2.5M.8 10.5h2.5M10.7 2.5h2.3M10.7 4.5h2.3M10.7 6.5h2.3M10.7 8.5h2.3M10.7 10.5h2.3" stroke="#9a7a30" stroke-width="1"/></svg>
<span class="t" style="left:34.3px;top:33px;font-size:12px;line-height:16px;transform:scaleX(0.8782);">ISIN</span>
<div class="a" style="left:133px;top:32px;width:43.5px;height:16px;overflow:hidden">
<span class="t" style="left:2.6px;top:1px;font-size:12px;line-height:16px;transform:scaleX(0.8708);">Simulation Sources.IntLib</span>
</div>
<span class="t" style="left:179.8px;top:33px;font-size:12px;line-height:16px;transform:scaleX(0.8708);">Sinusoidal Current Source</span>
<div class="a" style="left:8px;top:57px;width:9px;height:1px;background:repeating-linear-gradient(to right,#9a9a9a 0,#9a9a9a 1px,rgba(0,0,0,0) 1px,rgba(0,0,0,0) 2px);"></div>
<svg class="a" style="left:16.8px;top:50px" width="13" height="13" viewBox="0 0 13 13" ><rect x="3.5" y=".5" width="7" height="12" rx="1" fill="url(#cg)" stroke="#8a5a10" stroke-width="1"/><path d="M.8 2.5h2.5M.8 4.5h2.5M.8 6.5h2.5M.8 8.5h2.5M.8 10.5h2.5M10.7 2.5h2.3M10.7 4.5h2.3M10.7 6.5h2.3M10.7 8.5h2.3M10.7 10.5h2.3" stroke="#9a7a30" stroke-width="1"/></svg>
<span class="t" style="left:34.3px;top:49px;font-size:12px;line-height:16px;transform:scaleX(0.8371);">ISRC</span>
<div class="a" style="left:133px;top:48px;width:43.5px;height:16px;overflow:hidden">
<span class="t" style="left:2.6px;top:1px;font-size:12px;line-height:16px;transform:scaleX(0.8708);">Simulation Sources.IntLib</span>
</div>
<span class="t" style="left:179.8px;top:49px;font-size:12px;line-height:16px;transform:scaleX(0.8708);">Current Source</span>
</div>
<div class="a" style="left:1143px;top:187px;width:264px;height:18px;background:#f1f1f1;border-bottom:1px solid #b4b4b4;border-right:1px solid #b4b4b4;"></div>
<span class="t" style="left:1146.7px;top:188px;font-size:12px;line-height:16px;transform:scaleX(0.8676);">Component Name</span>
<svg class="a" style="left:1260px;top:192px" width="9" height="8" viewBox="0 0 9 8" ><path d="M4.5 .5 L.5 7.5" stroke="#a0a0a0" stroke-width="1"/><path d="M4.5 .5 L8.5 7.5 H.5" stroke="#fff" stroke-width="1" fill="none"/></svg>
<div class="a" style="left:1275px;top:189px;width:1px;height:14px;background:#a0a0a0;"></div>
<span class="t" style="left:1279.4px;top:188px;font-size:12px;line-height:16px;transform:scaleX(0.8450);">Library</span>
<div class="a" style="left:1319px;top:189px;width:1px;height:14px;background:#a0a0a0;"></div>
<span class="t" style="left:1323.3px;top:188px;font-size:12px;line-height:16px;transform:scaleX(0.8829);">Description</span>
<div class="a" style="left:1408px;top:187px;width:16px;height:70px;background:#f1f1f1;"></div>
<svg class="a" style="left:1412px;top:193px" width="8" height="5" viewBox="0 0 8 5" ><path d="M0 4.5 L4 .5 L8 4.5 Z" fill="#404040"/></svg>
<svg class="a" style="left:1412px;top:246px" width="8" height="5" viewBox="0 0 8 5" ><path d="M0 .5 L4 4.5 L8 .5 Z" fill="#404040"/></svg>
<div class="a" style="left:1409px;top:216px;width:14px;height:15px;border:1px solid #9a9a9a;border-radius:2px;background:linear-gradient(to right,#f6f6f6 0%,#e6e6e6 45%,#cfcfcf 55%,#d8d8d8 100%);"></div>
<span class="t" style="left:1146.7px;top:257px;font-size:12px;line-height:16px;transform:scaleX(0.8810);">23 components</span>
<div class="a" style="left:1142px;top:280px;width:283px;height:101px;background:#fffde6;border:1px solid #919191;"></div>
<svg class="a" style="left:1426.5px;top:281.6px" width="9" height="7" viewBox="0 0 9 7" ><path d="M.6 5.6 L5 1.4 L9.4 5.6" fill="none" stroke="#000" stroke-width="2.3"/></svg>
<svg class="a" style="left:1240px;top:290px" width="90" height="82" viewBox="0 0 90 82" ><path d="M27 4 V23 M27 58 V78" stroke="#000" stroke-width="2"/><circle cx="27.5" cy="40.4" r="18" fill="#fcfc9c" stroke="#1a1a1a" stroke-width="1"/><path d="M16.5 37 Q20 30 24 35.5 T31 41 T37.5 38" fill="none" stroke="#000" stroke-width="1"/><path d="M27 48 V56 M24.8 53.5 L27 56 L29.2 53.5" fill="none" stroke="#000" stroke-width="1"/></svg>
<span class="t" style="left:1286.5px;top:313px;font-size:14px;line-height:18px;color:#000080;font-family:'Liberation Serif','Noto Serif CJK SC',serif;transform:scaleX(1.0560);">I?</span>
<span class="t" style="left:1286.5px;top:332px;font-size:14px;line-height:18px;color:#000080;font-family:'Liberation Serif','Noto Serif CJK SC',serif;transform:scaleX(1.0465);">ISIN</span>
<div class="a" style="left:1142px;top:386px;width:283px;height:101px;background:#fff;border:1px solid #919191;"></div>
<svg class="a" style="left:1426.5px;top:386.6px" width="9" height="7" viewBox="0 0 9 7" ><path d="M.6 5.6 L5 1.4 L9.4 5.6" fill="none" stroke="#000" stroke-width="2.3"/></svg>
<div class="a" style="left:1143px;top:387px;width:281px;height:18px;background:#f1f1f1;border-bottom:1px solid #b4b4b4;border-right:1px solid #8a8a8a;"></div>
<span class="t" style="left:1146.7px;top:388px;font-size:12px;line-height:16px;transform:scaleX(0.8717);">Model Name</span>
<div class="a" style="left:1283px;top:389px;width:1px;height:14px;background:#a0a0a0;"></div>
<span class="t" style="left:1287.5px;top:388px;font-size:12px;line-height:16px;transform:scaleX(0.8976);">Model Type</span>
<div class="a" style="left:1175px;top:405px;width:249px;height:16px;background:#eeeeee;"></div>
<svg class="a" style="left:1159px;top:404px" width="17" height="17" viewBox="0 0 17 17" ><path d="M5.5 .5 H11 L14.5 4 V13 H5.5 Z" fill="#fff" stroke="#7a8ab0" stroke-width="1"/><rect x=".8" y="5.8" width="8.4" height="9.4" fill="#fff" stroke="#a020a0" stroke-width="1.4"/><path d="M2.8 13 V8.5 L5 11.5 L7.2 8.5 V13" fill="none" stroke="#a020a0" stroke-width="1.1"/><rect x="10" y="10" width="6.5" height="6.5" fill="#fff" stroke="#5a8a9a" stroke-width=".8"/><path d="M11.3 13.2 L12.8 15 L15.5 11.2" fill="none" stroke="#108a8a" stroke-width="1.3"/></svg>
<span class="t" style="left:1177.3px;top:405px;font-size:12px;line-height:16px;transform:scaleX(0.8782);">ISIN</span>
<span class="t" style="left:1286.3px;top:405px;font-size:12px;line-height:16px;transform:scaleX(0.8567);">Simulation</span>
<div class="a" style="left:1142px;top:492px;width:283px;height:104px;background:#fff;border:1px solid #919191;"></div>
<svg class="a" style="left:1426.5px;top:493.6px" width="9" height="7" viewBox="0 0 9 7" ><path d="M.6 5.6 L5 1.4 L9.4 5.6" fill="none" stroke="#000" stroke-width="2.3"/></svg>
<span class="t" style="left:1233.4px;top:536px;font-size:12px;line-height:16px;transform:scaleX(0.8959);">No Preview Available</span>
<div class="a" style="left:1142px;top:601px;width:283px;height:104px;background:#fff;border:1px solid #919191;"></div>
<svg class="a" style="left:1426.5px;top:601.6px" width="9" height="7" viewBox="0 0 9 7" ><path d="M.6 5.6 L5 1.4 L9.4 5.6" fill="none" stroke="#000" stroke-width="2.3"/></svg>
<div class="a" style="left:1143px;top:602px;width:281px;height:31px;background:#f1f1f1;border-bottom:1px solid #b4b4b4;"></div>
<span class="t" style="left:1146.7px;top:603px;font-size:12px;line-height:16px;transform:scaleX(0.8517);">Supplier</span>
<svg class="a" style="left:1210px;top:614px" width="9" height="8" viewBox="0 0 9 8" ><path d="M4.5 .5 L.5 7.5" stroke="#a0a0a0" stroke-width="1"/><path d="M4.5 .5 L8.5 7.5 H.5" stroke="#fff" stroke-width="1" fill="none"/></svg>
<div class="a" style="left:1225px;top:604px;width:1px;height:27px;background:#a0a0a0;"></div>
<div class="a" style="left:1308px;top:604px;width:1px;height:27px;background:#a0a0a0;"></div>
<div class="a" style="left:1391px;top:604px;width:1px;height:27px;background:#a0a0a0;"></div>
<span class="t" style="left:1229.6px;top:603px;font-size:12px;line-height:16px;transform:scaleX(0.8826);">Manufacturer</span>
<span class="t" style="left:1312.5px;top:603px;font-size:12px;line-height:16px;transform:scaleX(0.8729);">Description</span>
<span class="t" style="left:1402.6px;top:603px;font-size:12px;line-height:16px;transform:scaleX(0.8621);">Unit</span>
<span class="t" style="left:1397.7px;top:616px;font-size:12px;line-height:16px;transform:scaleX(0.8594);">Price</span>
<div class="a" style="left:1142px;top:710px;width:283px;height:101px;background:#fff;border:1px solid #919191;"></div>
<svg class="a" style="left:1426.5px;top:711.6px" width="9" height="7" viewBox="0 0 9 7" ><path d="M.6 5.6 L5 1.4 L9.4 5.6" fill="none" stroke="#000" stroke-width="2.3"/></svg>
<div class="a" style="left:0px;top:819px;width:282px;height:17px;background:#a8a5a0;"></div>
<div class="a" style="left:0px;top:819px;width:29px;height:17px;background:#efefef;"></div>
<svg class="a" style="left:0px;top:819px" width="278" height="17" viewBox="0 0 278 17" ><path d="M29 .5 L36.5 15.5 H69.6 L73 8 L70.8 .5 Z" fill="#efefef" stroke="#5e5e5e" stroke-width="1"/><path d="M70.8 .5 L77.6 15.5 H132.1 L139.5 .5" fill="none" stroke="#5e5e5e"/><path d="M139.5 .5 L136.3 7.5 L140.2 15.5 H203.7 L209.7 .5 Z" fill="#efefef" stroke="#5e5e5e" stroke-width="1"/><path d="M209.7 .5 L206.6 7.5 L210.4 15.5 H241.2 L247.2 .5 Z" fill="#efefef" stroke="#5e5e5e" stroke-width="1"/><path d="M247.2 .5 L244.2 7.5 L248 15.5 H279 V.5 Z" fill="#efefef" stroke="#5e5e5e" stroke-width="1"/><path d="M7 5 L3.2 8.5 L7 12 L6 8.5 Z" fill="#b0b0b0"/><path d="M18 5 L22 8.5 L18 12 L19.2 8.5 Z" fill="#000"/></svg>
<span class="t" style="left:41.6px;top:818px;font-size:12px;line-height:16px;color:#10104a;transform:scaleX(0.8286);">Files</span>
<span class="t" style="left:81px;top:818px;font-size:12px;line-height:16px;font-weight:bold;transform:scaleX(1.0030);">Projects</span>
<span class="t" style="left:147.5px;top:818px;font-size:12px;line-height:16px;color:#10104a;transform:scaleX(0.9073);">Navigator</span>
<span class="t" style="left:215.5px;top:818px;font-size:12px;line-height:16px;color:#10104a;transform:scaleX(0.7575);">PCB</span>
<div class="a" style="left:253px;top:819px;width:25px;height:16px;overflow:hidden">
<span class="t" style="left:1.3px;top:-1px;font-size:12px;line-height:16px;color:#10104a;transform:scaleX(0.8600);">PCB Filter</span>
</div>
<svg class="a" style="left:1130px;top:819px" width="305" height="17" viewBox="0 0 305 17" ><path d="M1 0 H4.4 L12.6 16 H1 Z" fill="#ececec"/><path d="M4.4 .5 L12.6 15.5 H69.7 L76.5 .5" fill="none" stroke="#5e5e5e"/><path d="M76.5 .5 L73.4 8.5 L77.8 15.5 H141.2 L148.7 .5 Z" fill="#f0f0f0" stroke="#5e5e5e"/></svg>
<span class="t" style="left:1146px;top:818px;font-size:12px;line-height:16px;font-weight:bold;transform:scaleX(0.9625);">Libraries</span>
<span class="t" style="left:1214.7px;top:818px;font-size:12px;line-height:16px;color:#10104a;transform:scaleX(0.8555);">Messages</span>
<div class="a" style="left:0px;top:836px;width:1435px;height:23px;background:#f0f0f0;"></div>
<div class="a" style="left:0px;top:836px;width:1435px;height:1px;background:#8a8a8a;"></div>
<div class="a" style="left:0px;top:837px;width:1435px;height:1px;background:#d0d0d0;"></div>
<span class="t" style="left:2.7px;top:840px;font-size:12px;line-height:16px;transform:scaleX(0.8746);">X:5050mil Y:2560mil</span>
<span class="t" style="left:110.7px;top:840px;font-size:12px;line-height:16px;transform:scaleX(0.8297);">Grid: 5mil</span>
<span class="t" style="left:174.7px;top:840px;font-size:12px;line-height:16px;transform:scaleX(0.8771);">(Hotspot Snap)</span>
<div class="a" style="left:363px;top:840px;width:1px;height:17px;background:#a0a0a0;"></div>
<div class="a" style="left:729px;top:840px;width:1px;height:17px;background:#a0a0a0;"></div>
<div class="a" style="left:1124px;top:841px;width:42px;height:16px;background:#f9f9f9;"></div>
<div class="a" style="left:1168px;top:841px;width:88px;height:16px;background:#f9f9f9;"></div>
<div class="a" style="left:1258px;top:841px;width:41px;height:16px;background:#f9f9f9;"></div>
<div class="a" style="left:1301px;top:841px;width:66px;height:16px;background:#f9f9f9;"></div>
<div class="a" style="left:1369px;top:841px;width:42px;height:16px;background:#f9f9f9;"></div>
<div class="a" style="left:1413px;top:841px;width:21px;height:16px;background:#f9f9f9;"></div>
<span class="t" style="left:1126.7px;top:841px;font-size:12px;line-height:16px;color:#5a5a5a;transform:scaleX(0.8372);"><u>S</u>ystem</span>
<span class="t" style="left:1174.9px;top:841px;font-size:12px;line-height:16px;color:#5a5a5a;transform:scaleX(0.8455);"><u>D</u>esign Compiler</span>
<span class="t" style="left:1267px;top:841px;font-size:12px;line-height:16px;color:#5a5a5a;transform:scaleX(0.8709);"><u>H</u>elp</span>
<span class="t" style="left:1307.5px;top:841px;font-size:12px;line-height:16px;color:#5a5a5a;transform:scaleX(0.8532);"><u>I</u>nstruments</span>
<span class="t" style="left:1379.5px;top:841px;font-size:12px;line-height:16px;color:#5a5a5a;transform:scaleX(0.7899);"><u>P</u>CB</span>
<span class="t" style="left:1418.8px;top:841px;font-size:12px;line-height:16px;color:#7a8ab0;transform:scaleX(0.8562);">&gt;&gt;</span>
<div class="a" style="left:1123px;top:840px;width:1px;height:18px;background:#d4d4d4;"></div>
<div class="a" style="left:0px;top:860px;width:1435px;height:2px;background:linear-gradient(to right,#3f86cc,#7ab6e6 30%,#4a90d0 60%,#6aa8de);"></div>
<div class="a" style="left:60px;top:860px;width:99px;height:2px;background:#f4f7fa;border-top:1px solid #2a2e34;"></div>
<div class="a" style="left:167px;top:860px;width:99px;height:2px;background:#f4f7fa;border-top:1px solid #2a2e34;"></div>
<div class="a" style="left:274px;top:860px;width:99px;height:2px;background:#f4f7fa;border-top:1px solid #2a2e34;"></div>
<div class="a" style="left:381px;top:860px;width:99px;height:2px;background:#f4f7fa;border-top:1px solid #2a2e34;"></div>
<div class="a" style="left:488px;top:860px;width:99px;height:2px;background:#f4f7fa;border-top:1px solid #2a2e34;"></div>
<div class="a" style="left:595px;top:860px;width:99px;height:2px;background:#f4f7fa;border-top:1px solid #2a2e34;"></div>
<div class="a" style="left:702px;top:860px;width:99px;height:2px;background:#f4f7fa;border-top:1px solid #2a2e34;"></div>
<div class="a" style="left:809px;top:860px;width:99px;height:2px;background:#f4f7fa;border-top:1px solid #2a2e34;"></div>
<div class="a" style="left:916px;top:860px;width:99px;height:2px;background:#f4f7fa;border-top:1px solid #2a2e34;"></div>
<div class="a" style="left:1027px;top:860px;width:51px;height:2px;background:#f4f7fa;border-top:1px solid #2a2e34;"></div>
<div class="a" style="left:1082px;top:860px;width:95px;height:2px;background:#f4f7fa;border-top:1px solid #2a2e34;"></div>
<div class="a" style="left:1181px;top:860px;width:240px;height:2px;background:#5c88ba;border-top:1px solid #2a3e5a;"></div>
<div class="a" style="left:1421px;top:860px;width:14px;height:2px;background:#39424c;"></div>
<span class="t" style="left:1252.4px;top:832px;font-size:18px;line-height:22px;color:rgba(255,255,255,.78);transform:scaleX(0.9491);text-shadow:1px 1px 0 rgba(105,105,105,.55),0 0 1px rgba(120,120,120,.5);">CSDN @</span>
<span class="t" style="left:1324px;top:833px;font-size:19px;line-height:22px;color:rgba(255,255,255,.8);transform:scaleX(1.0180);text-shadow:1px 1px 0 rgba(105,105,105,.55),0 0 1px rgba(120,120,120,.5);font-weight:300;">数 学 王 子</span>
</body></html>
